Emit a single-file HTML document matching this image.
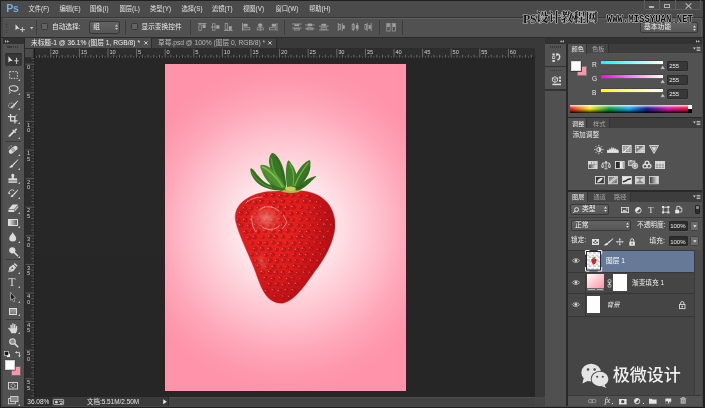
<!DOCTYPE html>
<html lang="zh"><head><meta charset="utf-8"><title>Photoshop</title><style>
html,body{margin:0;padding:0;background:#2a2a2a}
body{width:705px;height:408px;overflow:hidden;position:relative;font-family:"Liberation Sans","Noto Sans CJK SC",sans-serif}
#app{position:absolute;left:0;top:0;width:705px;height:408px;overflow:hidden;will-change:transform;opacity:0.999}
.a{position:absolute;box-sizing:border-box}
.t{position:absolute;white-space:nowrap;line-height:1;letter-spacing:0}
svg{overflow:visible}
</style></head><body>
<div id="app">
<div class="a" style="left:0px;top:0px;width:705px;height:408px;background:#202020;"></div>
<div class="a" style="left:1.2px;top:1.2px;width:702.2px;height:405.6px;background:#484848;"></div>
<div class="a" style="left:2.5px;top:37px;width:699.1px;height:368.5px;background:#2a2a2a;"></div>
<div class="a" style="left:1.2px;top:1.2px;width:702.2px;height:15.6px;background:#4c4c4c;"></div>
<span class="t" aria-label="Ps" style="left:6.2px;top:2.6px;font-size:10.5px;color:#78aee0;font-weight:bold;letter-spacing:-0.2px">Ps</span>
<span class="t" style="left:28.5px;top:6px;font-size:6.3px;color:#e2e2e2;">文件(F)</span>
<span class="t" style="left:59.5px;top:6px;font-size:6.3px;color:#e2e2e2;">编辑(E)</span>
<span class="t" style="left:90px;top:6px;font-size:6.3px;color:#e2e2e2;">图像(I)</span>
<span class="t" style="left:119.5px;top:6px;font-size:6.3px;color:#e2e2e2;">图层(L)</span>
<span class="t" style="left:150px;top:6px;font-size:6.3px;color:#e2e2e2;">类型(Y)</span>
<span class="t" style="left:181.5px;top:6px;font-size:6.3px;color:#e2e2e2;">选择(S)</span>
<span class="t" style="left:212px;top:6px;font-size:6.3px;color:#e2e2e2;">滤镜(T)</span>
<span class="t" style="left:243px;top:6px;font-size:6.3px;color:#e2e2e2;">视图(V)</span>
<span class="t" style="left:275.5px;top:6px;font-size:6.3px;color:#e2e2e2;">窗口(W)</span>
<span class="t" style="left:309px;top:6px;font-size:6.3px;color:#e2e2e2;">帮助(H)</span>
<div class="a" style="left:643.5px;top:0px;width:57px;height:10px;background:transparent;border:0.8px solid #5e5e5e;border-top:none;border-radius:0 0 2px 2px"></div>
<div class="a" style="left:658.5px;top:0px;width:0.8px;height:9.5px;background:#5e5e5e;"></div>
<div class="a" style="left:674.5px;top:0px;width:0.8px;height:9.5px;background:#5e5e5e;"></div>
<div class="a" style="left:648.5px;top:6.2px;width:5px;height:1.6px;background:#b4b4b4;"></div>
<div class="a" style="left:663.8px;top:3.6px;width:6.4px;height:4.6px;background:transparent;border:1px solid #b4b4b4;border-top-width:1.4px"></div>
<svg class="a" style="left:684.5px;top:2.6px;" width="7" height="6" viewBox="0 0 7 6"><path d="M0.6 0.4L6.4 5.6M6.4 0.4L0.6 5.6" stroke="#b4b4b4" stroke-width="1.2" fill="none"/></svg>
<div class="a" style="left:2.5px;top:17.5px;width:699.6px;height:19.5px;background:#525252;border-top:0.8px solid #606060;border-right:0.8px solid #606060;border-radius:0 2.5px 0 0"></div>
<div class="a" style="left:1.2px;top:16.6px;width:702.2px;height:1px;background:#383838;"></div>
<div class="a" style="left:5.5px;top:21.8px;width:1.2px;height:1.3px;background:#3a3a3a;"></div>
<div class="a" style="left:5.5px;top:24.400000000000002px;width:1.2px;height:1.3px;background:#3a3a3a;"></div>
<div class="a" style="left:5.5px;top:27.0px;width:1.2px;height:1.3px;background:#3a3a3a;"></div>
<div class="a" style="left:5.5px;top:29.6px;width:1.2px;height:1.3px;background:#3a3a3a;"></div>
<div class="a" style="left:5.5px;top:32.2px;width:1.2px;height:1.3px;background:#3a3a3a;"></div>
<svg class="a" style="left:15px;top:23.5px;" width="12" height="9" viewBox="0 0 12 9"><path d="M0.5 0.3L0.5 6.3L2.1 4.8L4.6 4.8Z" fill="#dcdcdc"/><path d="M7.4 3.2V8.2M4.9 5.7H9.9" stroke="#dcdcdc" stroke-width="0.9"/></svg>
<svg class="a" style="left:29.8px;top:26.6px;" width="4" height="3" viewBox="0 0 4 3"><path d="M0 0H3.4L1.7 2.2Z" fill="#d0d0d0"/></svg>
<div class="a" style="left:36.3px;top:20px;width:1px;height:14.5px;background:#3e3e3e;"></div>
<div class="a" style="left:41px;top:22.8px;width:7.4px;height:7.6px;background:#646464;border:1px solid #383838;border-radius:1.5px"></div>
<span class="t" style="left:52px;top:23.6px;font-size:6.7px;color:#ececec;">自动选择:</span>
<div class="a" style="left:89px;top:21px;width:30.5px;height:12.6px;background:#5c5c5c;border:0.8px solid #363636;border-radius:2.5px;background:linear-gradient(#646464,#565656)"></div>
<span class="t" style="left:93.2px;top:23.8px;font-size:6.7px;color:#ececec;">组</span>
<svg class="a" style="left:114.8px;top:24.3px;" width="3" height="6.4" viewBox="0 0 3 6.4"><path d="M0 2.4L1.5 0.5L3 2.4ZM0 3.9L1.5 5.8L3 3.9Z" fill="#d0d0d0"/></svg>
<div class="a" style="left:125.3px;top:20px;width:1px;height:14.5px;background:#3e3e3e;"></div>
<div class="a" style="left:131px;top:22.8px;width:7.4px;height:7.6px;background:#646464;border:1px solid #383838;border-radius:1.5px"></div>
<span class="t" style="left:141.5px;top:23.6px;font-size:6.7px;color:#ececec;">显示变换控件</span>
<div class="a" style="left:189.8px;top:20px;width:1px;height:14.5px;background:#3e3e3e;"></div>
<div class="a" style="left:283.8px;top:20px;width:1px;height:14.5px;background:#3e3e3e;"></div>
<div class="a" style="left:379px;top:20px;width:1px;height:14.5px;background:#3e3e3e;"></div>
<div class="a" style="left:402px;top:20px;width:1px;height:14.5px;background:#3e3e3e;"></div>
<div class="a" style="left:640px;top:22.3px;width:58.4px;height:11px;background:#606060;border:1px solid #3a3a3a;border-radius:2px;background:linear-gradient(#666,#585858)"></div>
<span class="t" style="left:644px;top:24.2px;font-size:6.8px;color:#f0f0f0;">基本功能</span>
<svg class="a" style="left:692.8px;top:24.6px;" width="3" height="6.4" viewBox="0 0 3 6.4"><path d="M0 2.4L1.5 0.5L3 2.4ZM0 3.9L1.5 5.8L3 3.9Z" fill="#e0e0e0"/></svg>
<div class="a" style="left:1.2px;top:37px;width:702.2px;height:1px;background:#2c2c2c;"></div>
<div class="a" style="left:25px;top:38px;width:520px;height:10.3px;background:#3a3a3a;"></div>
<div class="a" style="left:25px;top:38.2px;width:126.5px;height:10px;background:#505050;border-right:1px solid #2e2e2e"></div>
<span class="t" style="left:31px;top:39.9px;font-size:6.7px;color:#f0f0f0;">未标题-1 @ 36.1% (图层 1, RGB/8) *</span>
<svg class="a" style="left:143.5px;top:41.2px;" width="4" height="4" viewBox="0 0 4 4"><path d="M0.3 0.3L3.5 3.5M3.5 0.3L0.3 3.5" stroke="#e0e0e0" stroke-width="0.9"/></svg>
<div class="a" style="left:152px;top:38.6px;width:124.5px;height:9.6px;background:#434343;border-right:1px solid #2e2e2e"></div>
<span class="t" style="left:158px;top:39.9px;font-size:6.7px;color:#b8b8b8;">草莓.psd @ 100% (图层 0, RGB/8) *</span>
<svg class="a" style="left:268px;top:41.2px;" width="4" height="4" viewBox="0 0 4 4"><path d="M0.3 0.3L3.5 3.5M3.5 0.3L0.3 3.5" stroke="#d8d8d8" stroke-width="0.9"/></svg>
<div class="a" style="left:25px;top:48.3px;width:510px;height:349px;background:#272727;"></div>
<div class="a" style="left:25px;top:48.3px;width:510px;height:10px;background:#2e2e2e;border-bottom:0.8px solid #1c1c1c"></div>
<div class="a" style="left:25px;top:48.3px;width:10px;height:349px;background:#2e2e2e;border-right:0.8px solid #1c1c1c"></div>
<div class="a" style="left:25.3px;top:48.6px;width:9.2px;height:9.2px;background:#4c4c4c;border-right:0.8px solid #333;border-bottom:0.8px solid #333"></div>
<svg class="a" style="left:0px;top:0px;" width="705" height="408" viewBox="0 0 705 408"><g stroke="#949494" stroke-width="0.6" fill="none"><path d="M36.50 56.4V58"/><path d="M39.36 54.8V58"/><path d="M42.22 56.4V58"/><path d="M45.08 54.8V58"/><path d="M47.94 56.4V58"/><path d="M50.80 48.8V58"/><path d="M53.66 56.4V58"/><path d="M56.52 54.8V58"/><path d="M59.38 56.4V58"/><path d="M62.24 54.8V58"/><path d="M65.10 56.4V58"/><path d="M67.96 54.8V58"/><path d="M70.82 56.4V58"/><path d="M73.68 54.8V58"/><path d="M76.54 56.4V58"/><path d="M79.40 48.8V58"/><path d="M82.26 56.4V58"/><path d="M85.12 54.8V58"/><path d="M87.98 56.4V58"/><path d="M90.84 54.8V58"/><path d="M93.70 56.4V58"/><path d="M96.56 54.8V58"/><path d="M99.42 56.4V58"/><path d="M102.28 54.8V58"/><path d="M105.14 56.4V58"/><path d="M108.00 48.8V58"/><path d="M110.86 56.4V58"/><path d="M113.72 54.8V58"/><path d="M116.58 56.4V58"/><path d="M119.44 54.8V58"/><path d="M122.30 56.4V58"/><path d="M125.16 54.8V58"/><path d="M128.02 56.4V58"/><path d="M130.88 54.8V58"/><path d="M133.74 56.4V58"/><path d="M136.60 48.8V58"/><path d="M139.46 56.4V58"/><path d="M142.32 54.8V58"/><path d="M145.18 56.4V58"/><path d="M148.04 54.8V58"/><path d="M150.90 56.4V58"/><path d="M153.76 54.8V58"/><path d="M156.62 56.4V58"/><path d="M159.48 54.8V58"/><path d="M162.34 56.4V58"/><path d="M165.20 48.8V58"/><path d="M168.06 56.4V58"/><path d="M170.92 54.8V58"/><path d="M173.78 56.4V58"/><path d="M176.64 54.8V58"/><path d="M179.50 56.4V58"/><path d="M182.36 54.8V58"/><path d="M185.22 56.4V58"/><path d="M188.08 54.8V58"/><path d="M190.94 56.4V58"/><path d="M193.80 48.8V58"/><path d="M196.66 56.4V58"/><path d="M199.52 54.8V58"/><path d="M202.38 56.4V58"/><path d="M205.24 54.8V58"/><path d="M208.10 56.4V58"/><path d="M210.96 54.8V58"/><path d="M213.82 56.4V58"/><path d="M216.68 54.8V58"/><path d="M219.54 56.4V58"/><path d="M222.40 48.8V58"/><path d="M225.26 56.4V58"/><path d="M228.12 54.8V58"/><path d="M230.98 56.4V58"/><path d="M233.84 54.8V58"/><path d="M236.70 56.4V58"/><path d="M239.56 54.8V58"/><path d="M242.42 56.4V58"/><path d="M245.28 54.8V58"/><path d="M248.14 56.4V58"/><path d="M251.00 48.8V58"/><path d="M253.86 56.4V58"/><path d="M256.72 54.8V58"/><path d="M259.58 56.4V58"/><path d="M262.44 54.8V58"/><path d="M265.30 56.4V58"/><path d="M268.16 54.8V58"/><path d="M271.02 56.4V58"/><path d="M273.88 54.8V58"/><path d="M276.74 56.4V58"/><path d="M279.60 48.8V58"/><path d="M282.46 56.4V58"/><path d="M285.32 54.8V58"/><path d="M288.18 56.4V58"/><path d="M291.04 54.8V58"/><path d="M293.90 56.4V58"/><path d="M296.76 54.8V58"/><path d="M299.62 56.4V58"/><path d="M302.48 54.8V58"/><path d="M305.34 56.4V58"/><path d="M308.20 48.8V58"/><path d="M311.06 56.4V58"/><path d="M313.92 54.8V58"/><path d="M316.78 56.4V58"/><path d="M319.64 54.8V58"/><path d="M322.50 56.4V58"/><path d="M325.36 54.8V58"/><path d="M328.22 56.4V58"/><path d="M331.08 54.8V58"/><path d="M333.94 56.4V58"/><path d="M336.80 48.8V58"/><path d="M339.66 56.4V58"/><path d="M342.52 54.8V58"/><path d="M345.38 56.4V58"/><path d="M348.24 54.8V58"/><path d="M351.10 56.4V58"/><path d="M353.96 54.8V58"/><path d="M356.82 56.4V58"/><path d="M359.68 54.8V58"/><path d="M362.54 56.4V58"/><path d="M365.40 48.8V58"/><path d="M368.26 56.4V58"/><path d="M371.12 54.8V58"/><path d="M373.98 56.4V58"/><path d="M376.84 54.8V58"/><path d="M379.70 56.4V58"/><path d="M382.56 54.8V58"/><path d="M385.42 56.4V58"/><path d="M388.28 54.8V58"/><path d="M391.14 56.4V58"/><path d="M394.00 48.8V58"/><path d="M396.86 56.4V58"/><path d="M399.72 54.8V58"/><path d="M402.58 56.4V58"/><path d="M405.44 54.8V58"/><path d="M408.30 56.4V58"/><path d="M411.16 54.8V58"/><path d="M414.02 56.4V58"/><path d="M416.88 54.8V58"/><path d="M419.74 56.4V58"/><path d="M422.60 48.8V58"/><path d="M425.46 56.4V58"/><path d="M428.32 54.8V58"/><path d="M431.18 56.4V58"/><path d="M434.04 54.8V58"/><path d="M436.90 56.4V58"/><path d="M439.76 54.8V58"/><path d="M442.62 56.4V58"/><path d="M445.48 54.8V58"/><path d="M448.34 56.4V58"/><path d="M451.20 48.8V58"/><path d="M454.06 56.4V58"/><path d="M456.92 54.8V58"/><path d="M459.78 56.4V58"/><path d="M462.64 54.8V58"/><path d="M465.50 56.4V58"/><path d="M468.36 54.8V58"/><path d="M471.22 56.4V58"/><path d="M474.08 54.8V58"/><path d="M476.94 56.4V58"/><path d="M479.80 48.8V58"/><path d="M482.66 56.4V58"/><path d="M485.52 54.8V58"/><path d="M488.38 56.4V58"/><path d="M491.24 54.8V58"/><path d="M494.10 56.4V58"/><path d="M496.96 54.8V58"/><path d="M499.82 56.4V58"/><path d="M502.68 54.8V58"/><path d="M505.54 56.4V58"/><path d="M508.40 48.8V58"/><path d="M511.26 56.4V58"/><path d="M514.12 54.8V58"/><path d="M516.98 56.4V58"/><path d="M519.84 54.8V58"/><path d="M522.70 56.4V58"/><path d="M525.56 54.8V58"/><path d="M528.42 56.4V58"/><path d="M531.28 54.8V58"/></g><g stroke="#7e7e7e" stroke-width="0.55" fill="none"><path d="M25.5 64.20H34.7"/><path d="M32.6 67.06H34.3"/><path d="M31.2 69.92H34.3"/><path d="M32.6 72.78H34.3"/><path d="M31.2 75.64H34.3"/><path d="M32.6 78.50H34.3"/><path d="M31.2 81.36H34.3"/><path d="M32.6 84.22H34.3"/><path d="M31.2 87.08H34.3"/><path d="M32.6 89.94H34.3"/><path d="M25.5 92.80H34.7"/><path d="M32.6 95.66H34.3"/><path d="M31.2 98.52H34.3"/><path d="M32.6 101.38H34.3"/><path d="M31.2 104.24H34.3"/><path d="M32.6 107.10H34.3"/><path d="M31.2 109.96H34.3"/><path d="M32.6 112.82H34.3"/><path d="M31.2 115.68H34.3"/><path d="M32.6 118.54H34.3"/><path d="M25.5 121.40H34.7"/><path d="M32.6 124.26H34.3"/><path d="M31.2 127.12H34.3"/><path d="M32.6 129.98H34.3"/><path d="M31.2 132.84H34.3"/><path d="M32.6 135.70H34.3"/><path d="M31.2 138.56H34.3"/><path d="M32.6 141.42H34.3"/><path d="M31.2 144.28H34.3"/><path d="M32.6 147.14H34.3"/><path d="M25.5 150.00H34.7"/><path d="M32.6 152.86H34.3"/><path d="M31.2 155.72H34.3"/><path d="M32.6 158.58H34.3"/><path d="M31.2 161.44H34.3"/><path d="M32.6 164.30H34.3"/><path d="M31.2 167.16H34.3"/><path d="M32.6 170.02H34.3"/><path d="M31.2 172.88H34.3"/><path d="M32.6 175.74H34.3"/><path d="M25.5 178.60H34.7"/><path d="M32.6 181.46H34.3"/><path d="M31.2 184.32H34.3"/><path d="M32.6 187.18H34.3"/><path d="M31.2 190.04H34.3"/><path d="M32.6 192.90H34.3"/><path d="M31.2 195.76H34.3"/><path d="M32.6 198.62H34.3"/><path d="M31.2 201.48H34.3"/><path d="M32.6 204.34H34.3"/><path d="M25.5 207.20H34.7"/><path d="M32.6 210.06H34.3"/><path d="M31.2 212.92H34.3"/><path d="M32.6 215.78H34.3"/><path d="M31.2 218.64H34.3"/><path d="M32.6 221.50H34.3"/><path d="M31.2 224.36H34.3"/><path d="M32.6 227.22H34.3"/><path d="M31.2 230.08H34.3"/><path d="M32.6 232.94H34.3"/><path d="M25.5 235.80H34.7"/><path d="M32.6 238.66H34.3"/><path d="M31.2 241.52H34.3"/><path d="M32.6 244.38H34.3"/><path d="M31.2 247.24H34.3"/><path d="M32.6 250.10H34.3"/><path d="M31.2 252.96H34.3"/><path d="M32.6 255.82H34.3"/><path d="M31.2 258.68H34.3"/><path d="M32.6 261.54H34.3"/><path d="M25.5 264.40H34.7"/><path d="M32.6 267.26H34.3"/><path d="M31.2 270.12H34.3"/><path d="M32.6 272.98H34.3"/><path d="M31.2 275.84H34.3"/><path d="M32.6 278.70H34.3"/><path d="M31.2 281.56H34.3"/><path d="M32.6 284.42H34.3"/><path d="M31.2 287.28H34.3"/><path d="M32.6 290.14H34.3"/><path d="M25.5 293.00H34.7"/><path d="M32.6 295.86H34.3"/><path d="M31.2 298.72H34.3"/><path d="M32.6 301.58H34.3"/><path d="M31.2 304.44H34.3"/><path d="M32.6 307.30H34.3"/><path d="M31.2 310.16H34.3"/><path d="M32.6 313.02H34.3"/><path d="M31.2 315.88H34.3"/><path d="M32.6 318.74H34.3"/><path d="M25.5 321.60H34.7"/><path d="M32.6 324.46H34.3"/><path d="M31.2 327.32H34.3"/><path d="M32.6 330.18H34.3"/><path d="M31.2 333.04H34.3"/><path d="M32.6 335.90H34.3"/><path d="M31.2 338.76H34.3"/><path d="M32.6 341.62H34.3"/><path d="M31.2 344.48H34.3"/><path d="M32.6 347.34H34.3"/><path d="M25.5 350.20H34.7"/><path d="M32.6 353.06H34.3"/><path d="M31.2 355.92H34.3"/><path d="M32.6 358.78H34.3"/><path d="M31.2 361.64H34.3"/><path d="M32.6 364.50H34.3"/><path d="M31.2 367.36H34.3"/><path d="M32.6 370.22H34.3"/><path d="M31.2 373.08H34.3"/><path d="M32.6 375.94H34.3"/><path d="M25.5 378.80H34.7"/><path d="M32.6 381.66H34.3"/><path d="M31.2 384.52H34.3"/><path d="M32.6 387.38H34.3"/><path d="M31.2 390.24H34.3"/><path d="M32.6 393.10H34.3"/><path d="M31.2 395.96H34.3"/><path d="M32.6 61.34H34.3"/><path d="M31.2 58.48H34.3"/></g></svg>
<span class="t" aria-label="20" style="left:52.2px;top:49.9px;font-size:5.7px;color:#cfcfcf;">20</span>
<span class="t" aria-label="15" style="left:80.8px;top:49.9px;font-size:5.7px;color:#cfcfcf;">15</span>
<span class="t" aria-label="10" style="left:109.4px;top:49.9px;font-size:5.7px;color:#cfcfcf;">10</span>
<span class="t" aria-label="5" style="left:138.0px;top:49.9px;font-size:5.7px;color:#cfcfcf;">5</span>
<span class="t" aria-label="0" style="left:166.6px;top:49.9px;font-size:5.7px;color:#cfcfcf;">0</span>
<span class="t" aria-label="5" style="left:195.2px;top:49.9px;font-size:5.7px;color:#cfcfcf;">5</span>
<span class="t" aria-label="10" style="left:223.8px;top:49.9px;font-size:5.7px;color:#cfcfcf;">10</span>
<span class="t" aria-label="15" style="left:252.4px;top:49.9px;font-size:5.7px;color:#cfcfcf;">15</span>
<span class="t" aria-label="20" style="left:281.0px;top:49.9px;font-size:5.7px;color:#cfcfcf;">20</span>
<span class="t" aria-label="25" style="left:309.6px;top:49.9px;font-size:5.7px;color:#cfcfcf;">25</span>
<span class="t" aria-label="30" style="left:338.2px;top:49.9px;font-size:5.7px;color:#cfcfcf;">30</span>
<span class="t" aria-label="35" style="left:366.8px;top:49.9px;font-size:5.7px;color:#cfcfcf;">35</span>
<span class="t" aria-label="40" style="left:395.4px;top:49.9px;font-size:5.7px;color:#cfcfcf;">40</span>
<span class="t" aria-label="45" style="left:424.0px;top:49.9px;font-size:5.7px;color:#cfcfcf;">45</span>
<span class="t" aria-label="50" style="left:452.6px;top:49.9px;font-size:5.7px;color:#cfcfcf;">50</span>
<span class="t" aria-label="55" style="left:481.2px;top:49.9px;font-size:5.7px;color:#cfcfcf;">55</span>
<span class="t" aria-label="60" style="left:509.8px;top:49.9px;font-size:5.7px;color:#cfcfcf;">60</span>
<span class="t" aria-label="0" style="left:27.0px;top:65.4px;font-size:5.7px;color:#cfcfcf;">0</span>
<span class="t" aria-label="5" style="left:27.0px;top:94.0px;font-size:5.7px;color:#cfcfcf;">5</span>
<span class="t" aria-label="1" style="left:27.0px;top:122.6px;font-size:5.7px;color:#cfcfcf;">1</span>
<span class="t" aria-label="0" style="left:27.0px;top:128.2px;font-size:5.7px;color:#cfcfcf;">0</span>
<span class="t" aria-label="1" style="left:27.0px;top:151.2px;font-size:5.7px;color:#cfcfcf;">1</span>
<span class="t" aria-label="5" style="left:27.0px;top:156.8px;font-size:5.7px;color:#cfcfcf;">5</span>
<span class="t" aria-label="2" style="left:27.0px;top:179.8px;font-size:5.7px;color:#cfcfcf;">2</span>
<span class="t" aria-label="0" style="left:27.0px;top:185.4px;font-size:5.7px;color:#cfcfcf;">0</span>
<span class="t" aria-label="2" style="left:27.0px;top:208.4px;font-size:5.7px;color:#cfcfcf;">2</span>
<span class="t" aria-label="5" style="left:27.0px;top:214.0px;font-size:5.7px;color:#cfcfcf;">5</span>
<span class="t" aria-label="3" style="left:27.0px;top:237.0px;font-size:5.7px;color:#cfcfcf;">3</span>
<span class="t" aria-label="0" style="left:27.0px;top:242.6px;font-size:5.7px;color:#cfcfcf;">0</span>
<span class="t" aria-label="3" style="left:27.0px;top:265.6px;font-size:5.7px;color:#cfcfcf;">3</span>
<span class="t" aria-label="5" style="left:27.0px;top:271.2px;font-size:5.7px;color:#cfcfcf;">5</span>
<span class="t" aria-label="4" style="left:27.0px;top:294.2px;font-size:5.7px;color:#cfcfcf;">4</span>
<span class="t" aria-label="0" style="left:27.0px;top:299.8px;font-size:5.7px;color:#cfcfcf;">0</span>
<span class="t" aria-label="4" style="left:27.0px;top:322.8px;font-size:5.7px;color:#cfcfcf;">4</span>
<span class="t" aria-label="5" style="left:27.0px;top:328.4px;font-size:5.7px;color:#cfcfcf;">5</span>
<span class="t" aria-label="5" style="left:27.0px;top:351.4px;font-size:5.7px;color:#cfcfcf;">5</span>
<span class="t" aria-label="0" style="left:27.0px;top:357.0px;font-size:5.7px;color:#cfcfcf;">0</span>
<span class="t" aria-label="5" style="left:27.0px;top:380.0px;font-size:5.7px;color:#cfcfcf;">5</span>
<span class="t" aria-label="5" style="left:27.0px;top:385.6px;font-size:5.7px;color:#cfcfcf;">5</span>
<div class="a" style="left:534.6px;top:48.3px;width:10px;height:349px;background:#3a3a3a;"></div>
<div class="a" style="left:25px;top:397px;width:519.6px;height:8.6px;background:#444444;border-top:0.6px solid #505050"></div>
<div class="a" style="left:25px;top:397px;width:143.5px;height:8.6px;background:#3b3b3b;border-right:0.8px solid #2c2c2c"></div>
<div class="a" style="left:25px;top:397px;width:26.5px;height:8.6px;background:#2f2f2f;"></div>
<div class="a" style="left:534.6px;top:397px;width:9.4px;height:8.6px;background:#484848;"></div>
<span class="t" aria-label="36.08%" style="left:27.3px;top:398.6px;font-size:6.5px;color:#e8e8e8;">36.08%</span>
<svg class="a" style="left:53px;top:399px;" width="11" height="6" viewBox="0 0 11 6"><rect x="0.4" y="0.4" width="10.2" height="5.2" rx="0.8" fill="none" stroke="#cfcfcf" stroke-width="0.8"/><circle cx="3.4" cy="3" r="1.5" fill="#cfcfcf"/><path d="M6 2.2H9.2V4.6H7" stroke="#cfcfcf" stroke-width="0.9" fill="none"/></svg>
<span class="t" style="left:87px;top:398.6px;font-size:6.45px;color:#e8e8e8;">文档:5.51M/2.50M</span>
<svg class="a" style="left:163px;top:398.8px;" width="4" height="5.4" viewBox="0 0 4 5.4"><path d="M0.2 0.2L3.8 2.7L0.2 5.2Z" fill="#e6e6e6"/></svg>
<div class="a" id="doc" style="left:165px;top:64.2px;width:240.5px;height:327.1px;background:radial-gradient(circle 165px at 50% 50%, #ffffff 0%, #fff9fa 12%, #ffebef 25%, #ffcad4 50%, #ffa8ba 75%, #ff99ae 90%, #ff94aa 100%)"></div>
<div class="a" style="left:2.5px;top:38px;width:21px;height:367.8px;background:#535353;"></div>
<div class="a" style="left:2.5px;top:38px;width:21px;height:5.6px;background:#333333;"></div>
<svg class="a" style="left:5.2px;top:39.6px;" width="4.4" height="2.8" viewBox="0 0 4.4 2.8"><path d="M0 0L1.7 1.4L0 2.8ZM2.2 0L3.9 1.4L2.2 2.8Z" fill="#c4c4c4"/></svg>
<div class="a" style="left:7.4px;top:46.4px;width:1.2px;height:1.3px;background:#3a3a3a;"></div>
<div class="a" style="left:9.35px;top:46.4px;width:1.2px;height:1.3px;background:#3a3a3a;"></div>
<div class="a" style="left:11.3px;top:46.4px;width:1.2px;height:1.3px;background:#3a3a3a;"></div>
<div class="a" style="left:13.25px;top:46.4px;width:1.2px;height:1.3px;background:#3a3a3a;"></div>
<div class="a" style="left:15.2px;top:46.4px;width:1.2px;height:1.3px;background:#3a3a3a;"></div>
<div class="a" style="left:17.15px;top:46.4px;width:1.2px;height:1.3px;background:#3a3a3a;"></div>
<div class="a" style="left:5px;top:53px;width:17px;height:13.4px;background:#383838;border-radius:2px;box-shadow:inset 0 0.6px 1px #222"></div>
<div class="a" style="left:5px;top:141px;width:16px;height:0.9px;background:#3d3d3d;"></div>
<div class="a" style="left:5px;top:259.4px;width:16px;height:0.9px;background:#3d3d3d;"></div>
<div class="a" style="left:5px;top:319.2px;width:16px;height:0.9px;background:#3d3d3d;"></div>
<svg class="a" style="left:7.8px;top:55.8px;" width="12" height="8" viewBox="0 0 12 8"><path d="M0.4 0.2V6.4L2.1 4.9L4.8 4.9Z" fill="#dcdcdc"/><path d="M8.5 2.4V7.2M6.9 4.8H10.1" stroke="#dcdcdc" stroke-width="0.8"/><path d="M8.5 1.6l-0.9 1.1h1.8zM8.5 8l-0.9-1.1h1.8zM6.2 4.8l1-0.9v1.8zM10.8 4.8l-1-0.9v1.8z" fill="#dcdcdc"/></svg>
<svg class="a" style="left:8.5px;top:70.5px;" width="9" height="8" viewBox="0 0 9 8"><rect x="0.6" y="0.6" width="7.8" height="6.8" fill="none" stroke="#dcdcdc" stroke-width="0.85" stroke-dasharray="1.6 1.2"/></svg>
<svg class="a" style="left:18.2px;top:78.6px;" width="2" height="2" viewBox="0 0 2 2"><path d="M2 0V2H0Z" fill="#c8c8c8"/></svg>
<svg class="a" style="left:8px;top:85px;" width="10.5" height="9" viewBox="0 0 10.5 9"><ellipse cx="5.6" cy="3.4" rx="4.4" ry="2.7" fill="none" stroke="#dcdcdc" stroke-width="1.05" transform="rotate(7 5.6 3.4)"/><path d="M2 5.2C1 6 1.4 7 2.4 7.2C1.6 7.8 1.4 8.4 1.2 8.8" fill="none" stroke="#dcdcdc" stroke-width="0.9"/></svg>
<svg class="a" style="left:18.2px;top:93.2px;" width="2" height="2" viewBox="0 0 2 2"><path d="M2 0V2H0Z" fill="#c8c8c8"/></svg>
<svg class="a" style="left:8px;top:99.5px;" width="10.5" height="9" viewBox="0 0 10.5 9"><ellipse cx="3.4" cy="5.6" rx="2.9" ry="2.5" fill="none" stroke="#dcdcdc" stroke-width="0.8" stroke-dasharray="1.2 0.8"/><path d="M9.8 0.4L4.6 5.2L5.8 6.4L10.2 1Z" fill="#dcdcdc"/><path d="M4.2 5.4C3.2 6 3 7.2 2.2 7.8C3.6 8.2 5.4 7.6 5.8 6.6Z" fill="#dcdcdc"/></svg>
<svg class="a" style="left:18.2px;top:107.8px;" width="2" height="2" viewBox="0 0 2 2"><path d="M2 0V2H0Z" fill="#c8c8c8"/></svg>
<svg class="a" style="left:8px;top:114px;" width="9.5" height="9.5" viewBox="0 0 9.5 9.5"><path d="M2.6 0V6.9H9.5M0 2.6H6.9V9.5" fill="none" stroke="#dcdcdc" stroke-width="1.3"/><path d="M9 0.5L6 3.5" stroke="#dcdcdc" stroke-width="0.7"/></svg>
<svg class="a" style="left:18.2px;top:122.4px;" width="2" height="2" viewBox="0 0 2 2"><path d="M2 0V2H0Z" fill="#c8c8c8"/></svg>
<svg class="a" style="left:8.3px;top:128px;" width="9.5" height="9.5" viewBox="0 0 9.5 9.5"><path d="M0.4 9.1L1 7.2L5.4 2.8L6.7 4.1L2.3 8.5Z" fill="#dcdcdc"/><path d="M4.8 1.9L7.6 4.7" stroke="#dcdcdc" stroke-width="1.3"/><path d="M6.2 2.2L7.8 0.6C8.4 0 9.6 1.1 8.9 1.8L7.3 3.4Z" fill="#dcdcdc"/></svg>
<svg class="a" style="left:18.2px;top:136.8px;" width="2" height="2" viewBox="0 0 2 2"><path d="M2 0V2H0Z" fill="#c8c8c8"/></svg>
<svg class="a" style="left:8px;top:145px;" width="10.5" height="9.5" viewBox="0 0 10.5 9.5"><g transform="rotate(-38 5.2 4.8)"><rect x="0.2" y="2.6" width="10" height="4.4" rx="2.2" fill="#dcdcdc"/><rect x="3.6" y="2.6" width="3.2" height="4.4" fill="#a8a8a8"/></g><path d="M0.8 3.4A2.6 2.6 0 0 1 4 1" fill="none" stroke="#dcdcdc" stroke-width="0.7" stroke-dasharray="1 0.7"/></svg>
<svg class="a" style="left:18.2px;top:153.6px;" width="2" height="2" viewBox="0 0 2 2"><path d="M2 0V2H0Z" fill="#c8c8c8"/></svg>
<svg class="a" style="left:8px;top:159px;" width="10.5" height="9.5" viewBox="0 0 10.5 9.5"><path d="M10 0.2L4.4 5.6L5.4 6.6L10.4 0.8Z" fill="#dcdcdc"/><path d="M4 5.8C2.6 6.2 2.6 7.6 1 8.2C2.6 9.2 5.2 8.6 5.4 6.8Z" fill="#dcdcdc"/></svg>
<svg class="a" style="left:18.2px;top:167.6px;" width="2" height="2" viewBox="0 0 2 2"><path d="M2 0V2H0Z" fill="#c8c8c8"/></svg>
<svg class="a" style="left:8px;top:174px;" width="9.5" height="9.5" viewBox="0 0 9.5 9.5"><path d="M3.3 0.9A1.6 1.6 0 0 1 6.3 0.9C6.6 2.2 5.7 2.8 5.7 4.2H8.4C9 4.2 9.2 4.6 9.2 5.2V6.4H0.4V5.2C0.4 4.6 0.6 4.2 1.2 4.2H3.9C3.9 2.8 3 2.2 3.3 0.9Z" fill="#dcdcdc"/><rect x="0.4" y="7.3" width="8.8" height="1.5" fill="#dcdcdc"/></svg>
<svg class="a" style="left:18.2px;top:182.2px;" width="2" height="2" viewBox="0 0 2 2"><path d="M2 0V2H0Z" fill="#c8c8c8"/></svg>
<svg class="a" style="left:8px;top:189px;" width="10.5" height="9.5" viewBox="0 0 10.5 9.5"><path d="M10 0.4L5 5.2L6 6.2L10.4 1Z" fill="#dcdcdc"/><path d="M4.6 5.4C3.4 5.8 3.4 7 2 7.6C3.4 8.4 5.6 8 5.8 6.4Z" fill="#dcdcdc"/><path d="M1 4.6A3.2 3.2 0 0 1 6.4 1.8" fill="none" stroke="#dcdcdc" stroke-width="0.9"/><path d="M0 3.4L1 5.6L2.6 4Z" fill="#dcdcdc"/></svg>
<svg class="a" style="left:18.2px;top:197.2px;" width="2" height="2" viewBox="0 0 2 2"><path d="M2 0V2H0Z" fill="#c8c8c8"/></svg>
<svg class="a" style="left:8px;top:204px;" width="10.5" height="8.5" viewBox="0 0 10.5 8.5"><path d="M0.4 5.2L4.6 0.6H10.2L6 5.2Z" fill="#dcdcdc"/><path d="M0.4 5.8H6V8H0.4Z" fill="#dcdcdc"/><path d="M6.5 5.6L10.2 1.4V3.6L6.5 8Z" fill="#bdbdbd"/></svg>
<svg class="a" style="left:18.2px;top:211.6px;" width="2" height="2" viewBox="0 0 2 2"><path d="M2 0V2H0Z" fill="#c8c8c8"/></svg>
<div class="a" style="left:8px;top:219px;width:9.6px;height:7.4px;border:0.9px solid #dcdcdc;background:linear-gradient(90deg,#e8e8e8,#5a5a5a)"></div>
<svg class="a" style="left:18.2px;top:225.6px;" width="2" height="2" viewBox="0 0 2 2"><path d="M2 0V2H0Z" fill="#c8c8c8"/></svg>
<svg class="a" style="left:9px;top:232px;" width="7.5" height="9.5" viewBox="0 0 7.5 9.5"><path d="M3.7 0.2C5 2.6 7.2 4.4 7.2 6.3A3.5 3.2 0 0 1 0.2 6.3C0.2 4.4 2.4 2.6 3.7 0.2Z" fill="#dcdcdc"/></svg>
<svg class="a" style="left:18.2px;top:240.6px;" width="2" height="2" viewBox="0 0 2 2"><path d="M2 0V2H0Z" fill="#c8c8c8"/></svg>
<svg class="a" style="left:8.5px;top:247px;" width="9.5" height="9.5" viewBox="0 0 9.5 9.5"><circle cx="3.3" cy="3.3" r="3.1" fill="#dcdcdc"/><path d="M5.2 5.4L8.6 8.8" stroke="#dcdcdc" stroke-width="1.5" stroke-linecap="round"/></svg>
<svg class="a" style="left:18.2px;top:255.6px;" width="2" height="2" viewBox="0 0 2 2"><path d="M2 0V2H0Z" fill="#c8c8c8"/></svg>
<svg class="a" style="left:8px;top:263px;" width="10" height="9.5" viewBox="0 0 10 9.5"><path d="M0.3 9.2L1.4 4.4L5.2 1.6L8 4.4L5.2 8.2Z" fill="#dcdcdc"/><path d="M5.8 1L8.6 3.8L9.6 2.8L6.8 0Z" fill="#dcdcdc"/><circle cx="4.4" cy="5.2" r="0.9" fill="#535353"/><path d="M0.5 9L3.8 5.8" stroke="#535353" stroke-width="0.6"/></svg>
<svg class="a" style="left:18.2px;top:271.6px;" width="2" height="2" viewBox="0 0 2 2"><path d="M2 0V2H0Z" fill="#c8c8c8"/></svg>
<span class="t" style="left:8.6px;top:276.6px;font-size:11.5px;color:#dcdcdc;font-family:'Liberation Serif',serif;">T</span>
<svg class="a" style="left:18.2px;top:285.6px;" width="2" height="2" viewBox="0 0 2 2"><path d="M2 0V2H0Z" fill="#c8c8c8"/></svg>
<svg class="a" style="left:10px;top:292px;" width="6" height="10.5" viewBox="0 0 6 10.5"><path d="M0.5 0.5V8.3L2.2 6.7L3.5 9.8L4.8 9.2L3.5 6.2H5.7Z" fill="#1c1c1c" stroke="#d0d0d0" stroke-width="0.6"/></svg>
<svg class="a" style="left:18.2px;top:300.6px;" width="2" height="2" viewBox="0 0 2 2"><path d="M2 0V2H0Z" fill="#c8c8c8"/></svg>
<div class="a" style="left:8.8px;top:308px;width:8px;height:7px;border:0.9px solid #dcdcdc;background:linear-gradient(#a0a0a0,#7c7c7c)"></div>
<svg class="a" style="left:18.2px;top:314.4px;" width="2" height="2" viewBox="0 0 2 2"><path d="M2 0V2H0Z" fill="#c8c8c8"/></svg>
<svg class="a" style="left:8px;top:323px;" width="10.5" height="10.5" viewBox="0 0 10.5 10.5"><g stroke="#dcdcdc" stroke-width="1.35" stroke-linecap="round" fill="none"><path d="M3.1 6V2.4"/><path d="M4.9 5.6V1"/><path d="M6.7 5.8V1.6"/><path d="M8.5 6.4V3.4"/><path d="M2.6 7.4L0.9 5.4"/></g><path d="M2.4 5.2H9.2C9.2 7.4 8.8 8.8 7.8 10.2H3.4C2.6 9 2.2 8 2 6.6Z" fill="#dcdcdc"/></svg>
<svg class="a" style="left:18.2px;top:332px;" width="2" height="2" viewBox="0 0 2 2"><path d="M2 0V2H0Z" fill="#c8c8c8"/></svg>
<svg class="a" style="left:9px;top:338px;" width="9.5" height="9.5" viewBox="0 0 9.5 9.5"><circle cx="3.5" cy="3.5" r="2.8" fill="#8e8e8e" stroke="#dcdcdc" stroke-width="1.1"/><path d="M5.8 5.8L8.8 8.8" stroke="#dcdcdc" stroke-width="1.6" stroke-linecap="round"/></svg>
<svg class="a" style="left:4px;top:351px;" width="7" height="7" viewBox="0 0 7 7"><rect x="2.4" y="2.4" width="4" height="4" fill="#f0f0f0" stroke="#222" stroke-width="0.5"/><rect x="0.4" y="0.4" width="4" height="4" fill="#1a1a1a" stroke="#e0e0e0" stroke-width="0.6"/></svg>
<svg class="a" style="left:14.5px;top:351px;" width="6" height="6.5" viewBox="0 0 6 6.5"><path d="M1.4 1.4H4.4V4.8" fill="none" stroke="#dcdcdc" stroke-width="0.9"/><path d="M0 1.4L1.8 0V2.8ZM4.4 6.2L3 4.4H5.8Z" fill="#dcdcdc"/></svg>
<div class="a" style="left:10.8px;top:365.8px;width:10.6px;height:10.6px;background:#fe97ab;border:0.6px solid #6a6a6a"></div>
<div class="a" style="left:4.9px;top:359.9px;width:10.4px;height:10.6px;background:#ffffff;border:0.5px solid #cfcfcf;box-shadow:0 0 0 0.6px #444"></div>
<svg class="a" style="left:8px;top:382px;" width="10" height="7.5" viewBox="0 0 10 7.5"><rect x="0.5" y="0.5" width="9" height="6.5" fill="none" stroke="#dcdcdc" stroke-width="0.9"/><circle cx="5" cy="3.75" r="2" fill="none" stroke="#dcdcdc" stroke-width="1" stroke-dasharray="0.9 0.6"/></svg>
<svg class="a" style="left:8px;top:395.6px;" width="10.5" height="8.5" viewBox="0 0 10.5 8.5"><rect x="0.5" y="2.6" width="7" height="5.2" fill="#535353" stroke="#dcdcdc" stroke-width="0.8"/><rect x="2.6" y="0.5" width="7.4" height="5.2" fill="#8a8a8a" stroke="#dcdcdc" stroke-width="0.8"/></svg>
<svg class="a" style="left:18.2px;top:403.6px;" width="2" height="2" viewBox="0 0 2 2"><path d="M2 0V2H0Z" fill="#c8c8c8"/></svg>
<div class="a" style="left:544.8px;top:38px;width:157px;height:5.6px;background:#333333;"></div>
<svg class="a" style="left:560px;top:39.6px;" width="4.4" height="2.8" viewBox="0 0 4.4 2.8"><path d="M1.7 0L0 1.4L1.7 2.8ZM3.9 0L2.2 1.4L3.9 2.8Z" fill="#c4c4c4"/></svg>
<svg class="a" style="left:696px;top:39.6px;" width="4.4" height="2.8" viewBox="0 0 4.4 2.8"><path d="M0 0L1.7 1.4L0 2.8ZM2.2 0L3.9 1.4L2.2 2.8Z" fill="#c4c4c4"/></svg>
<div class="a" style="left:545px;top:43.6px;width:20.9px;height:362px;background:#515151;"></div>
<div class="a" style="left:545px;top:43.6px;width:20.9px;height:22.2px;background:#535353;"></div>
<div class="a" style="left:545px;top:67px;width:20.9px;height:22.4px;background:#535353;"></div>
<div class="a" style="left:545px;top:65.8px;width:20.9px;height:1.2px;background:#333;"></div>
<div class="a" style="left:545px;top:89.4px;width:20.9px;height:1.2px;background:#333;"></div>
<div class="a" style="left:549.8px;top:46.4px;width:1.2px;height:1.3px;background:#3a3a3a;"></div>
<div class="a" style="left:551.75px;top:46.4px;width:1.2px;height:1.3px;background:#3a3a3a;"></div>
<div class="a" style="left:553.6999999999999px;top:46.4px;width:1.2px;height:1.3px;background:#3a3a3a;"></div>
<div class="a" style="left:555.65px;top:46.4px;width:1.2px;height:1.3px;background:#3a3a3a;"></div>
<div class="a" style="left:557.5999999999999px;top:46.4px;width:1.2px;height:1.3px;background:#3a3a3a;"></div>
<div class="a" style="left:559.55px;top:46.4px;width:1.2px;height:1.3px;background:#3a3a3a;"></div>
<div class="a" style="left:549.8px;top:69.6px;width:1.2px;height:1.3px;background:#3a3a3a;"></div>
<div class="a" style="left:551.75px;top:69.6px;width:1.2px;height:1.3px;background:#3a3a3a;"></div>
<div class="a" style="left:553.6999999999999px;top:69.6px;width:1.2px;height:1.3px;background:#3a3a3a;"></div>
<div class="a" style="left:555.65px;top:69.6px;width:1.2px;height:1.3px;background:#3a3a3a;"></div>
<div class="a" style="left:557.5999999999999px;top:69.6px;width:1.2px;height:1.3px;background:#3a3a3a;"></div>
<div class="a" style="left:559.55px;top:69.6px;width:1.2px;height:1.3px;background:#3a3a3a;"></div>
<svg class="a" style="left:551.5px;top:53px;" width="9.5" height="9.5" viewBox="0 0 9.5 9.5"><rect x="0.4" y="0.5" width="2.4" height="2" fill="#dcdcdc"/><rect x="0.4" y="3.7" width="2.4" height="2" fill="none" stroke="#dcdcdc" stroke-width="0.7"/><rect x="0.4" y="7" width="2.4" height="2" fill="#dcdcdc"/><path d="M4.6 0.8C8.4 0.8 8.8 5.6 5.4 7.2" fill="none" stroke="#dcdcdc" stroke-width="1.3"/><path d="M4.2 0.2V3.4L7 1.2Z" fill="#dcdcdc"/></svg>
<svg class="a" style="left:551.5px;top:76px;" width="9.5" height="9.5" viewBox="0 0 9.5 9.5"><path d="M0.4 2L3 0.6L5.6 2V5L3 6.4L0.4 5Z" fill="none" stroke="#dcdcdc" stroke-width="0.9"/><path d="M0.4 2L3 3.4L5.6 2M3 3.4V6.4" stroke="#dcdcdc" stroke-width="0.7" fill="none"/><rect x="7" y="0.6" width="2" height="2" fill="#dcdcdc"/><rect x="7" y="3.8" width="2" height="2" fill="#dcdcdc"/><rect x="0.4" y="7.6" width="8.6" height="1.6" fill="#dcdcdc"/></svg>
<div class="a" style="left:567.5px;top:43.6px;width:134.1px;height:73.4px;background:#535353;"></div>
<div class="a" style="left:567.5px;top:43.6px;width:134.1px;height:9.8px;background:#3e3e3e;"></div>
<div class="a" style="left:567.5px;top:43.6px;width:41px;height:9.8px;background:#464646;border-right:0.8px solid #343434"></div>
<div class="a" style="left:567.5px;top:43.6px;width:19.5px;height:10.3px;background:#535353;border-right:1px solid #363636"></div>
<span class="t" style="left:571.5px;top:45.800000000000004px;font-size:6.2px;color:#ececec;">颜色</span>
<span class="t" style="left:592px;top:45.800000000000004px;font-size:6.2px;color:#a8a8a8;">色板</span>
<svg class="a" style="left:693px;top:46.6px;" width="7.5" height="4.5" viewBox="0 0 7.5 4.5"><path d="M0 0.6H2.8L1.4 2.6Z" fill="#d6d6d6"/><path d="M3.6 0.4H7.4M3.6 2H7.4M3.6 3.6H7.4" stroke="#d6d6d6" stroke-width="0.8"/></svg>
<div class="a" style="left:576.5px;top:66.4px;width:10.2px;height:9.8px;background:#fe97ab;border:0.5px solid #777"></div>
<div class="a" style="left:570.6px;top:60.5px;width:10.7px;height:10.1px;background:#fff;border:0.5px solid #dcdcdc;box-shadow:0.3px 0.3px 0 0.6px #3a3a3a"></div>
<span class="t" aria-label="R" style="left:592px;top:61.900000000000006px;font-size:6.6px;color:#ececec;">R</span>
<div class="a" style="left:600.6px;top:61.2px;width:62.8px;height:3.1px;background:linear-gradient(90deg,#00ffff,#ffffff);box-shadow:0 -0.5px 0 #3a3a3a, 0 0.5px 0 #6a6a6a"></div>
<svg class="a" style="left:660.4px;top:64.8px;" width="5.4" height="4.4" viewBox="0 0 5.4 4.4"><path d="M2.7 0.2L5.2 4.2H0.2Z" fill="#c8c8c8" stroke="#3a3a3a" stroke-width="0.4"/></svg>
<div class="a" style="left:667px;top:60.6px;width:20.8px;height:10px;background:#393939;border:0.7px solid #2c2c2c;border-radius:1px;box-shadow:0 0.6px 0 #646464"></div>
<span class="t" aria-label="255" style="left:669.2px;top:62.800000000000004px;font-size:6px;color:#ececec;">255</span>
<span class="t" aria-label="G" style="left:592px;top:76.0px;font-size:6.6px;color:#ececec;">G</span>
<div class="a" style="left:600.6px;top:75.3px;width:62.8px;height:3.1px;background:linear-gradient(90deg,#ff00ff,#ffffff);box-shadow:0 -0.5px 0 #3a3a3a, 0 0.5px 0 #6a6a6a"></div>
<svg class="a" style="left:660.4px;top:78.89999999999999px;" width="5.4" height="4.4" viewBox="0 0 5.4 4.4"><path d="M2.7 0.2L5.2 4.2H0.2Z" fill="#c8c8c8" stroke="#3a3a3a" stroke-width="0.4"/></svg>
<div class="a" style="left:667px;top:74.7px;width:20.8px;height:10px;background:#393939;border:0.7px solid #2c2c2c;border-radius:1px;box-shadow:0 0.6px 0 #646464"></div>
<span class="t" aria-label="255" style="left:669.2px;top:76.89999999999999px;font-size:6px;color:#ececec;">255</span>
<span class="t" aria-label="B" style="left:592px;top:90.10000000000001px;font-size:6.6px;color:#ececec;">B</span>
<div class="a" style="left:600.6px;top:89.4px;width:62.8px;height:3.1px;background:linear-gradient(90deg,#ffff00,#ffffff);box-shadow:0 -0.5px 0 #3a3a3a, 0 0.5px 0 #6a6a6a"></div>
<svg class="a" style="left:660.4px;top:93.0px;" width="5.4" height="4.4" viewBox="0 0 5.4 4.4"><path d="M2.7 0.2L5.2 4.2H0.2Z" fill="#c8c8c8" stroke="#3a3a3a" stroke-width="0.4"/></svg>
<div class="a" style="left:667px;top:88.80000000000001px;width:20.8px;height:10px;background:#393939;border:0.7px solid #2c2c2c;border-radius:1px;box-shadow:0 0.6px 0 #646464"></div>
<span class="t" aria-label="255" style="left:669.2px;top:91.0px;font-size:6px;color:#ececec;">255</span>
<div class="a" style="left:569.8px;top:105px;width:118px;height:7.8px;background:linear-gradient(90deg,#ee1c24 0%,#f6ec1a 17%,#0ea03c 33%,#1cacf2 50%,#1a2494 65%,#d81ca4 83%,#ee1436 100%)"></div>
<div class="a" style="left:569.8px;top:105px;width:118px;height:7.8px;background:linear-gradient(180deg,rgba(255,255,255,0.85) 0%,rgba(255,255,255,0) 40%,rgba(0,0,0,0) 50%,rgba(0,0,0,0.9) 100%)"></div>
<div class="a" style="left:687.8px;top:105px;width:4.4px;height:3.9px;background:#fff;"></div>
<div class="a" style="left:687.8px;top:108.9px;width:4.4px;height:3.9px;background:#000;"></div>
<div class="a" style="left:567.5px;top:118.4px;width:134.1px;height:71.4px;background:#535353;"></div>
<div class="a" style="left:567.5px;top:118.4px;width:134.1px;height:9.2px;background:#3e3e3e;"></div>
<div class="a" style="left:567.5px;top:118.4px;width:42px;height:9.2px;background:#464646;border-right:0.8px solid #343434"></div>
<div class="a" style="left:567.5px;top:118.4px;width:19px;height:9.7px;background:#535353;border-right:1px solid #363636"></div>
<span class="t" style="left:572px;top:120.60000000000001px;font-size:6.2px;color:#ececec;">调整</span>
<span class="t" style="left:593px;top:120.60000000000001px;font-size:6.2px;color:#a8a8a8;">样式</span>
<svg class="a" style="left:693px;top:121.4px;" width="7.5" height="4.5" viewBox="0 0 7.5 4.5"><path d="M0 0.6H2.8L1.4 2.6Z" fill="#d6d6d6"/><path d="M3.6 0.4H7.4M3.6 2H7.4M3.6 3.6H7.4" stroke="#d6d6d6" stroke-width="0.8"/></svg>
<span class="t" style="left:572.4px;top:132px;font-size:6.7px;color:#ececec;">添加调整</span>
<div class="a" style="left:567.5px;top:192px;width:134.1px;height:213.6px;background:#535353;"></div>
<div class="a" style="left:567.5px;top:192px;width:134.1px;height:9.6px;background:#3e3e3e;"></div>
<div class="a" style="left:567.5px;top:192px;width:63px;height:9.6px;background:#464646;border-right:0.8px solid #343434"></div>
<div class="a" style="left:567.5px;top:192px;width:20px;height:10.1px;background:#535353;border-right:1px solid #363636"></div>
<span class="t" style="left:572px;top:194.2px;font-size:6.2px;color:#ececec;">图层</span>
<span class="t" style="left:593.4px;top:194.2px;font-size:6.2px;color:#a8a8a8;">通道</span>
<span class="t" style="left:614px;top:194.2px;font-size:6.2px;color:#a8a8a8;">路径</span>
<svg class="a" style="left:693px;top:195px;" width="7.5" height="4.5" viewBox="0 0 7.5 4.5"><path d="M0 0.6H2.8L1.4 2.6Z" fill="#d6d6d6"/><path d="M3.6 0.4H7.4M3.6 2H7.4M3.6 3.6H7.4" stroke="#d6d6d6" stroke-width="0.8"/></svg>
<div class="a" style="left:570.3px;top:204px;width:39px;height:11.2px;background:#5e5e5e;border:0.8px solid #3a3a3a;border-radius:2px;background:linear-gradient(#646464,#585858)"></div>
<svg class="a" style="left:573.4px;top:206.6px;" width="6.5" height="6.5" viewBox="0 0 6.5 6.5"><circle cx="3.6" cy="2.6" r="2" fill="none" stroke="#ececec" stroke-width="0.9"/><path d="M2.2 4L0.4 6" stroke="#ececec" stroke-width="1"/></svg>
<span class="t" style="left:582px;top:206.2px;font-size:6.8px;color:#f4f4f4;">类型</span>
<svg class="a" style="left:603.6px;top:206.4px;" width="3" height="6.4" viewBox="0 0 3 6.4"><path d="M0 2.4L1.5 0.5L3 2.4ZM0 3.9L1.5 5.8L3 3.9Z" fill="#e0e0e0"/></svg>
<div class="a" style="left:567.5px;top:217.2px;width:134.1px;height:0.8px;background:#3e3e3e;"></div>
<div class="a" style="left:570.5px;top:220px;width:60.6px;height:10.6px;background:#5e5e5e;border:0.8px solid #3a3a3a;border-radius:2px;background:linear-gradient(#646464,#585858)"></div>
<span class="t" style="left:575px;top:222px;font-size:6.8px;color:#f4f4f4;">正常</span>
<svg class="a" style="left:626px;top:222.2px;" width="3" height="6.4" viewBox="0 0 3 6.4"><path d="M0 2.4L1.5 0.5L3 2.4ZM0 3.9L1.5 5.8L3 3.9Z" fill="#e0e0e0"/></svg>
<span class="t" style="left:637px;top:222.2px;font-size:6.7px;color:#f0f0f0;">不透明度:</span>
<div class="a" style="left:668.5px;top:220.8px;width:19.8px;height:10px;background:#2e2e2e;border:0.6px solid #282828;border-radius:1px;box-shadow:0 0.6px 0 #666"></div>
<span class="t" aria-label="100%" style="left:670.2px;top:223px;font-size:6px;color:#ececec;">100%</span>
<div class="a" style="left:689.6px;top:220.8px;width:9.6px;height:10px;background:#6c6c6c;border:0.6px solid #444;border-radius:1.5px"></div>
<svg class="a" style="left:692.6px;top:224.6px;" width="4" height="3" viewBox="0 0 4 3"><path d="M0.2 0.2H3.6L1.9 2.4Z" fill="#e8e8e8"/></svg>
<span class="t" style="left:571px;top:237px;font-size:6.7px;color:#f0f0f0;">锁定:</span>
<span class="t" style="left:649.6px;top:237.6px;font-size:6.7px;color:#f0f0f0;">填充:</span>
<div class="a" style="left:668.5px;top:236.4px;width:19.8px;height:10px;background:#2e2e2e;border:0.6px solid #282828;border-radius:1px;box-shadow:0 0.6px 0 #666"></div>
<span class="t" aria-label="100%" style="left:670.2px;top:238.6px;font-size:6px;color:#ececec;">100%</span>
<div class="a" style="left:689.6px;top:236.4px;width:9.6px;height:10px;background:#6c6c6c;border:0.6px solid #444;border-radius:1.5px"></div>
<svg class="a" style="left:692.6px;top:240.2px;" width="4" height="3" viewBox="0 0 4 3"><path d="M0.2 0.2H3.6L1.9 2.4Z" fill="#e8e8e8"/></svg>
<div class="a" style="left:567.5px;top:249.6px;width:126.7px;height:145.4px;background:#464646;"></div>
<div class="a" style="left:567.5px;top:249.6px;width:17.5px;height:66px;background:#484848;"></div>
<div class="a" style="left:584.6px;top:250px;width:109.6px;height:21.6px;background:#677a99;"></div>
<div class="a" style="left:567.5px;top:249.6px;width:126.7px;height:0.8px;background:#383838;"></div>
<div class="a" style="left:567.5px;top:271.5px;width:126.7px;height:0.8px;background:#383838;"></div>
<div class="a" style="left:567.5px;top:293.2px;width:126.7px;height:0.8px;background:#383838;"></div>
<div class="a" style="left:567.5px;top:315.5px;width:126.7px;height:0.8px;background:#383838;"></div>
<div class="a" style="left:584.8px;top:249.6px;width:0.8px;height:66px;background:#383838;"></div>
<svg class="a" style="left:572px;top:258.4px;" width="7.8" height="5.2" viewBox="0 0 7.8 5.2"><path d="M0.3 2.6C1.9 0.1 5.9 0.1 7.5 2.6C5.9 5.1 1.9 5.1 0.3 2.6Z" fill="#4a4a4a" stroke="#dadada" stroke-width="0.7"/><circle cx="3.9" cy="2.5" r="1.3" fill="#e4e4e4"/></svg>
<svg class="a" style="left:572px;top:280.2px;" width="7.8" height="5.2" viewBox="0 0 7.8 5.2"><path d="M0.3 2.6C1.9 0.1 5.9 0.1 7.5 2.6C5.9 5.1 1.9 5.1 0.3 2.6Z" fill="#4a4a4a" stroke="#dadada" stroke-width="0.7"/><circle cx="3.9" cy="2.5" r="1.3" fill="#e4e4e4"/></svg>
<svg class="a" style="left:572px;top:302.2px;" width="7.8" height="5.2" viewBox="0 0 7.8 5.2"><path d="M0.3 2.6C1.9 0.1 5.9 0.1 7.5 2.6C5.9 5.1 1.9 5.1 0.3 2.6Z" fill="#4a4a4a" stroke="#dadada" stroke-width="0.7"/><circle cx="3.9" cy="2.5" r="1.3" fill="#e4e4e4"/></svg>
<div class="a" style="left:587.2px;top:252px;width:13.2px;height:17.6px;background:#ffffff;background:repeating-conic-gradient(#cfcfcf 0% 25%, #ffffff 0% 50%) 0 0/4.4px 4.4px"></div>
<svg class="a" style="left:585.2px;top:250px;" width="17.2" height="21.6" viewBox="0 0 17.2 21.6"><path d="M0.5 4.5V0.5H4.5M12.7 0.5H16.7V4.5M16.7 17.1V21.1H12.7M4.5 21.1H0.5V17.1" fill="none" stroke="#f4f4f4" stroke-width="1"/><rect x="1.6" y="1.6" width="14" height="18.4" fill="none" stroke="#161616" stroke-width="0.8"/></svg>
<svg class="a" style="left:590.8px;top:257.2px;" width="5.8" height="7.8" viewBox="0 0 5.8 7.8"><path d="M0.3 2.8C0.6 1.7 2 1.6 2.9 1.8C3.9 1.6 5.3 1.8 5.5 2.8C5.7 4.2 4.5 7.4 2.8 7.6C1.6 7.4 0.1 4.4 0.3 2.8Z" fill="#d8232a"/><path d="M1 1.3L2.9 2.1L4.9 1.1L3.6 0.1L2.6 0.9L1.8 0.2Z" fill="#3c7a2a"/></svg>
<span class="t" style="left:606px;top:258.2px;font-size:6.7px;color:#ffffff;">图层 1</span>
<div class="a" style="left:587.2px;top:274.2px;width:17px;height:16.6px;background:linear-gradient(140deg,#fff6f7 8%,#ffc4ce 50%,#fd92a6 95%)"></div>
<div class="a" style="left:587.2px;top:287.8px;width:17px;height:3px;background:#6a6a6a;"></div>
<div class="a" style="left:588.2px;top:288.6px;width:6.4px;height:1.8px;background:#b0b0b0;"></div>
<div class="a" style="left:596.8px;top:288.6px;width:6.4px;height:1.8px;background:#b0b0b0;"></div>
<svg class="a" style="left:606.6px;top:278.6px;" width="5" height="9" viewBox="0 0 5 9"><rect x="1" y="0.5" width="3" height="3.4" rx="1.4" fill="none" stroke="#dcdcdc" stroke-width="0.8"/><rect x="1" y="5" width="3" height="3.4" rx="1.4" fill="none" stroke="#dcdcdc" stroke-width="0.8"/><path d="M2.5 2.6V6.4" stroke="#dcdcdc" stroke-width="0.8"/></svg>
<div class="a" style="left:613.4px;top:274.2px;width:13.2px;height:17.2px;background:#fff;"></div>
<span class="t" style="left:632px;top:279.6px;font-size:6.7px;color:#f0f0f0;">渐变填充 1</span>
<div class="a" style="left:587.2px;top:296px;width:13.2px;height:17.2px;background:#fff;"></div>
<span class="t" style="left:607.4px;top:302px;font-size:6.5px;color:#f0f0f0;transform:skewX(-12deg)">背景</span>
<svg class="a" style="left:679px;top:300.6px;" width="6.5" height="8" viewBox="0 0 6.5 8"><rect x="0.5" y="3.4" width="5.5" height="4.2" fill="none" stroke="#dcdcdc" stroke-width="0.9"/><path d="M1.6 3.4V2.2A1.6 1.6 0 0 1 4.9 2.2V3.4" fill="none" stroke="#dcdcdc" stroke-width="0.9"/><rect x="2.6" y="4.6" width="1.3" height="1.8" fill="#dcdcdc"/></svg>
<div class="a" style="left:567.5px;top:395px;width:134.1px;height:10.6px;background:#535353;border-top:0.8px solid #3a3a3a"></div>
<svg class="a" style="left:0px;top:0px;" width="705" height="408" viewBox="0 0 705 408"><defs>
<radialGradient id="sb" cx="0.42" cy="0.34" r="0.78"><stop offset="0" stop-color="#ee2620"/><stop offset="0.5" stop-color="#e01b1b"/><stop offset="0.82" stop-color="#c41418"/><stop offset="1" stop-color="#a00c14"/></radialGradient>
<radialGradient id="sh" cx="0.5" cy="0.5" r="0.5"><stop offset="0" stop-color="#fff" stop-opacity="0.38"/><stop offset="0.5" stop-color="#ffb0a0" stop-opacity="0.2"/><stop offset="1" stop-color="#ff8070" stop-opacity="0"/></radialGradient>
<linearGradient id="sr" x1="0" x2="1" y1="0" y2="0.25"><stop offset="0.62" stop-color="#8a000a" stop-opacity="0"/><stop offset="1" stop-color="#8a000a" stop-opacity="0.35"/></linearGradient>
<radialGradient id="sdg" cx="0.5" cy="0.5" r="0.5"><stop offset="0" stop-color="#8c0810" stop-opacity="0.8"/><stop offset="0.55" stop-color="#a00c14" stop-opacity="0.5"/><stop offset="1" stop-color="#b81218" stop-opacity="0"/></radialGradient>
<g id="sd"><ellipse cx="0" cy="0" rx="3.2" ry="2.9" fill="url(#sdg)"/><ellipse cx="0.1" cy="0.3" rx="1" ry="0.85" fill="#c02c26" opacity="0.85"/><ellipse cx="-0.9" cy="-1.2" rx="0.8" ry="0.5" fill="#ffb8b0" opacity="0.6" transform="rotate(-30)"/></g>
<clipPath id="sc"><path d="M288.0 191.0C293.5 190.9 296.9 190.5 301.0 190.8C305.1 191.1 309.1 191.8 312.6 193.0C316.1 194.2 319.2 195.7 322.0 197.8C324.8 199.9 327.6 202.6 329.6 205.6C331.6 208.6 333.1 212.4 334.0 216.0C334.9 219.6 335.2 223.2 335.0 227.0C334.8 230.8 333.8 234.9 332.6 239.0C331.4 243.1 329.6 247.3 327.6 251.4C325.6 255.5 322.9 259.8 320.5 263.6C318.1 267.4 315.5 270.5 313.0 274.0C310.5 277.5 307.9 281.3 305.5 284.4C303.1 287.5 300.9 290.3 298.5 292.8C296.1 295.3 293.6 297.9 291.0 299.6C288.4 301.3 285.7 302.8 283.0 303.2C280.3 303.6 277.5 303.1 275.0 302.2C272.5 301.3 270.0 299.5 268.0 297.6C266.0 295.7 264.5 293.3 263.0 290.6C261.5 287.9 260.6 285.5 259.0 281.6C257.4 277.7 255.5 271.8 253.6 267.0C251.7 262.2 249.6 257.7 247.6 253.0C245.6 248.3 243.3 243.2 241.6 239.0C239.9 234.8 238.5 231.2 237.4 227.6C236.3 224.0 235.2 220.8 235.2 217.6C235.2 214.4 235.8 211.4 237.2 208.6C238.6 205.8 240.7 203.2 243.4 201.0C246.1 198.8 249.3 196.8 253.4 195.2C257.5 193.6 262.2 192.3 268.0 191.6C273.8 190.9 282.5 191.1 288.0 191.0Z"/></clipPath>
</defs>
<path d="M288.0 191.0C293.5 190.9 296.9 190.5 301.0 190.8C305.1 191.1 309.1 191.8 312.6 193.0C316.1 194.2 319.2 195.7 322.0 197.8C324.8 199.9 327.6 202.6 329.6 205.6C331.6 208.6 333.1 212.4 334.0 216.0C334.9 219.6 335.2 223.2 335.0 227.0C334.8 230.8 333.8 234.9 332.6 239.0C331.4 243.1 329.6 247.3 327.6 251.4C325.6 255.5 322.9 259.8 320.5 263.6C318.1 267.4 315.5 270.5 313.0 274.0C310.5 277.5 307.9 281.3 305.5 284.4C303.1 287.5 300.9 290.3 298.5 292.8C296.1 295.3 293.6 297.9 291.0 299.6C288.4 301.3 285.7 302.8 283.0 303.2C280.3 303.6 277.5 303.1 275.0 302.2C272.5 301.3 270.0 299.5 268.0 297.6C266.0 295.7 264.5 293.3 263.0 290.6C261.5 287.9 260.6 285.5 259.0 281.6C257.4 277.7 255.5 271.8 253.6 267.0C251.7 262.2 249.6 257.7 247.6 253.0C245.6 248.3 243.3 243.2 241.6 239.0C239.9 234.8 238.5 231.2 237.4 227.6C236.3 224.0 235.2 220.8 235.2 217.6C235.2 214.4 235.8 211.4 237.2 208.6C238.6 205.8 240.7 203.2 243.4 201.0C246.1 198.8 249.3 196.8 253.4 195.2C257.5 193.6 262.2 192.3 268.0 191.6C273.8 190.9 282.5 191.1 288.0 191.0Z" fill="url(#sb)"/>
<g clip-path="url(#sc)">
<rect x="230" y="185" width="110" height="125" fill="url(#sr)"/>
<use href="#sd" transform="translate(259.2 196.5) scale(0.88)"/><use href="#sd" transform="translate(265.6 195.3) scale(1.09)"/><use href="#sd" transform="translate(273.3 195.3) scale(1.14)"/><use href="#sd" transform="translate(280.8 196.2) scale(1.03)"/><use href="#sd" transform="translate(286.4 195.2) scale(1.01)"/><use href="#sd" transform="translate(293.2 195.5) scale(0.92)"/><use href="#sd" transform="translate(300.2 195.9) scale(0.98)"/><use href="#sd" transform="translate(308.6 196.0) scale(1.04)"/><use href="#sd" transform="translate(249.0 201.7) scale(1.10)"/><use href="#sd" transform="translate(255.3 202.6) scale(1.10)"/><use href="#sd" transform="translate(261.6 201.4) scale(1.12)"/><use href="#sd" transform="translate(269.4 202.7) scale(0.97)"/><use href="#sd" transform="translate(275.7 202.1) scale(1.08)"/><use href="#sd" transform="translate(283.1 201.2) scale(0.95)"/><use href="#sd" transform="translate(291.3 202.3) scale(0.89)"/><use href="#sd" transform="translate(297.0 201.3) scale(0.87)"/><use href="#sd" transform="translate(305.0 201.4) scale(1.02)"/><use href="#sd" transform="translate(311.4 201.4) scale(1.07)"/><use href="#sd" transform="translate(317.8 202.1) scale(0.88)"/><use href="#sd" transform="translate(244.8 208.4) scale(1.04)"/><use href="#sd" transform="translate(251.3 208.6) scale(0.91)"/><use href="#sd" transform="translate(258.6 208.2) scale(0.95)"/><use href="#sd" transform="translate(265.6 207.1) scale(0.88)"/><use href="#sd" transform="translate(273.1 207.4) scale(1.03)"/><use href="#sd" transform="translate(279.8 207.7) scale(1.14)"/><use href="#sd" transform="translate(287.0 207.9) scale(1.11)"/><use href="#sd" transform="translate(293.4 207.2) scale(1.12)"/><use href="#sd" transform="translate(301.6 207.4) scale(0.91)"/><use href="#sd" transform="translate(308.4 208.5) scale(0.91)"/><use href="#sd" transform="translate(315.8 208.4) scale(1.03)"/><use href="#sd" transform="translate(321.9 207.2) scale(0.86)"/><use href="#sd" transform="translate(241.1 213.2) scale(1.07)"/><use href="#sd" transform="translate(247.7 213.3) scale(1.02)"/><use href="#sd" transform="translate(256.1 213.9) scale(0.93)"/><use href="#sd" transform="translate(263.3 213.2) scale(0.85)"/><use href="#sd" transform="translate(269.1 213.6) scale(0.87)"/><use href="#sd" transform="translate(275.9 213.5) scale(1.02)"/><use href="#sd" transform="translate(282.8 213.5) scale(1.12)"/><use href="#sd" transform="translate(291.4 214.0) scale(1.06)"/><use href="#sd" transform="translate(297.7 213.1) scale(0.86)"/><use href="#sd" transform="translate(303.6 214.4) scale(1.06)"/><use href="#sd" transform="translate(312.3 212.9) scale(1.04)"/><use href="#sd" transform="translate(318.5 214.1) scale(0.95)"/><use href="#sd" transform="translate(326.4 213.0) scale(1.01)"/><use href="#sd" transform="translate(238.5 220.3) scale(0.96)"/><use href="#sd" transform="translate(245.3 220.2) scale(1.11)"/><use href="#sd" transform="translate(251.9 220.1) scale(1.11)"/><use href="#sd" transform="translate(259.1 219.8) scale(0.96)"/><use href="#sd" transform="translate(266.1 219.8) scale(0.87)"/><use href="#sd" transform="translate(273.3 220.4) scale(1.11)"/><use href="#sd" transform="translate(280.4 219.4) scale(1.07)"/><use href="#sd" transform="translate(287.1 219.5) scale(1.10)"/><use href="#sd" transform="translate(293.3 220.0) scale(0.86)"/><use href="#sd" transform="translate(301.2 219.6) scale(0.92)"/><use href="#sd" transform="translate(308.4 219.6) scale(1.03)"/><use href="#sd" transform="translate(315.8 219.2) scale(0.85)"/><use href="#sd" transform="translate(321.6 219.9) scale(0.91)"/><use href="#sd" transform="translate(328.4 220.2) scale(1.05)"/><use href="#sd" transform="translate(241.0 225.4) scale(1.09)"/><use href="#sd" transform="translate(249.2 226.1) scale(0.97)"/><use href="#sd" transform="translate(255.6 225.2) scale(0.89)"/><use href="#sd" transform="translate(262.5 226.0) scale(1.10)"/><use href="#sd" transform="translate(269.9 226.2) scale(0.93)"/><use href="#sd" transform="translate(275.9 225.4) scale(0.93)"/><use href="#sd" transform="translate(283.0 225.4) scale(1.04)"/><use href="#sd" transform="translate(290.5 225.2) scale(1.10)"/><use href="#sd" transform="translate(298.4 225.4) scale(0.87)"/><use href="#sd" transform="translate(303.7 226.1) scale(0.86)"/><use href="#sd" transform="translate(311.9 225.6) scale(0.94)"/><use href="#sd" transform="translate(319.0 224.7) scale(0.89)"/><use href="#sd" transform="translate(325.4 224.7) scale(1.10)"/><use href="#sd" transform="translate(332.0 224.9) scale(0.86)"/><use href="#sd" transform="translate(245.6 232.1) scale(1.06)"/><use href="#sd" transform="translate(251.5 231.4) scale(0.90)"/><use href="#sd" transform="translate(258.1 231.4) scale(1.06)"/><use href="#sd" transform="translate(265.4 231.0) scale(0.95)"/><use href="#sd" transform="translate(273.4 231.4) scale(1.03)"/><use href="#sd" transform="translate(280.5 231.2) scale(1.09)"/><use href="#sd" transform="translate(287.7 230.7) scale(1.13)"/><use href="#sd" transform="translate(294.4 230.8) scale(0.99)"/><use href="#sd" transform="translate(301.2 232.1) scale(0.96)"/><use href="#sd" transform="translate(308.1 232.0) scale(1.09)"/><use href="#sd" transform="translate(315.8 231.3) scale(1.05)"/><use href="#sd" transform="translate(321.5 231.8) scale(1.10)"/><use href="#sd" transform="translate(329.3 231.7) scale(0.91)"/><use href="#sd" transform="translate(249.2 237.9) scale(0.95)"/><use href="#sd" transform="translate(254.7 237.2) scale(1.02)"/><use href="#sd" transform="translate(263.0 237.3) scale(0.86)"/><use href="#sd" transform="translate(270.1 236.6) scale(1.09)"/><use href="#sd" transform="translate(275.9 237.0) scale(1.09)"/><use href="#sd" transform="translate(282.9 236.7) scale(1.00)"/><use href="#sd" transform="translate(290.9 237.8) scale(1.06)"/><use href="#sd" transform="translate(298.3 237.3) scale(1.13)"/><use href="#sd" transform="translate(303.8 236.9) scale(1.01)"/><use href="#sd" transform="translate(311.1 237.7) scale(1.04)"/><use href="#sd" transform="translate(318.5 237.8) scale(1.02)"/><use href="#sd" transform="translate(325.2 237.1) scale(1.10)"/><use href="#sd" transform="translate(252.0 243.4) scale(0.86)"/><use href="#sd" transform="translate(259.8 243.2) scale(0.97)"/><use href="#sd" transform="translate(266.5 243.3) scale(1.00)"/><use href="#sd" transform="translate(273.3 242.5) scale(1.01)"/><use href="#sd" transform="translate(279.8 243.9) scale(1.13)"/><use href="#sd" transform="translate(286.6 243.2) scale(0.89)"/><use href="#sd" transform="translate(293.9 243.7) scale(1.12)"/><use href="#sd" transform="translate(301.0 242.9) scale(0.91)"/><use href="#sd" transform="translate(308.2 243.9) scale(0.89)"/><use href="#sd" transform="translate(315.5 242.4) scale(0.91)"/><use href="#sd" transform="translate(321.5 243.5) scale(0.95)"/><use href="#sd" transform="translate(255.3 249.0) scale(1.01)"/><use href="#sd" transform="translate(261.9 248.6) scale(1.04)"/><use href="#sd" transform="translate(269.7 249.1) scale(1.11)"/><use href="#sd" transform="translate(276.7 249.7) scale(0.92)"/><use href="#sd" transform="translate(283.9 249.6) scale(1.12)"/><use href="#sd" transform="translate(290.2 248.8) scale(1.13)"/><use href="#sd" transform="translate(297.0 249.9) scale(1.12)"/><use href="#sd" transform="translate(303.8 248.7) scale(1.07)"/><use href="#sd" transform="translate(311.1 248.5) scale(1.10)"/><use href="#sd" transform="translate(318.4 249.6) scale(0.89)"/><use href="#sd" transform="translate(325.3 249.4) scale(0.86)"/><use href="#sd" transform="translate(252.3 254.5) scale(0.87)"/><use href="#sd" transform="translate(258.3 254.3) scale(1.02)"/><use href="#sd" transform="translate(266.0 255.1) scale(0.89)"/><use href="#sd" transform="translate(272.4 254.5) scale(1.10)"/><use href="#sd" transform="translate(280.9 255.7) scale(0.88)"/><use href="#sd" transform="translate(286.2 255.7) scale(0.99)"/><use href="#sd" transform="translate(294.5 254.7) scale(0.99)"/><use href="#sd" transform="translate(301.0 254.9) scale(1.03)"/><use href="#sd" transform="translate(307.1 255.3) scale(1.10)"/><use href="#sd" transform="translate(314.4 254.9) scale(1.07)"/><use href="#sd" transform="translate(321.8 254.5) scale(0.90)"/><use href="#sd" transform="translate(256.4 261.4) scale(0.93)"/><use href="#sd" transform="translate(263.2 261.3) scale(1.08)"/><use href="#sd" transform="translate(270.1 260.7) scale(1.12)"/><use href="#sd" transform="translate(277.2 261.2) scale(1.08)"/><use href="#sd" transform="translate(284.0 260.7) scale(1.07)"/><use href="#sd" transform="translate(289.7 260.6) scale(0.99)"/><use href="#sd" transform="translate(296.6 260.7) scale(1.04)"/><use href="#sd" transform="translate(304.7 260.5) scale(1.13)"/><use href="#sd" transform="translate(311.8 260.6) scale(1.05)"/><use href="#sd" transform="translate(318.6 261.0) scale(0.97)"/><use href="#sd" transform="translate(258.8 266.2) scale(0.93)"/><use href="#sd" transform="translate(266.7 266.9) scale(1.00)"/><use href="#sd" transform="translate(273.8 266.9) scale(1.15)"/><use href="#sd" transform="translate(280.2 267.3) scale(0.87)"/><use href="#sd" transform="translate(287.2 267.2) scale(0.86)"/><use href="#sd" transform="translate(294.8 266.3) scale(0.99)"/><use href="#sd" transform="translate(300.4 266.8) scale(1.03)"/><use href="#sd" transform="translate(307.2 267.5) scale(0.98)"/><use href="#sd" transform="translate(262.9 272.0) scale(1.15)"/><use href="#sd" transform="translate(270.3 272.0) scale(1.12)"/><use href="#sd" transform="translate(276.4 272.7) scale(1.14)"/><use href="#sd" transform="translate(283.0 272.7) scale(1.13)"/><use href="#sd" transform="translate(290.9 272.6) scale(1.14)"/><use href="#sd" transform="translate(298.1 272.9) scale(0.88)"/><use href="#sd" transform="translate(304.7 272.6) scale(0.91)"/><use href="#sd" transform="translate(310.7 272.7) scale(0.89)"/><use href="#sd" transform="translate(265.7 278.2) scale(1.06)"/><use href="#sd" transform="translate(273.1 278.7) scale(1.04)"/><use href="#sd" transform="translate(280.5 278.1) scale(0.92)"/><use href="#sd" transform="translate(287.9 279.3) scale(1.11)"/><use href="#sd" transform="translate(293.2 277.9) scale(0.93)"/><use href="#sd" transform="translate(300.9 278.8) scale(0.88)"/><use href="#sd" transform="translate(270.1 284.3) scale(1.05)"/><use href="#sd" transform="translate(277.4 284.2) scale(1.01)"/><use href="#sd" transform="translate(283.9 285.2) scale(0.98)"/><use href="#sd" transform="translate(290.3 283.9) scale(1.11)"/><use href="#sd" transform="translate(296.7 283.8) scale(1.02)"/><use href="#sd" transform="translate(266.8 291.1) scale(0.98)"/><use href="#sd" transform="translate(273.5 290.1) scale(0.95)"/><use href="#sd" transform="translate(279.8 291.1) scale(1.12)"/><use href="#sd" transform="translate(286.5 290.2) scale(0.96)"/><use href="#sd" transform="translate(293.8 290.2) scale(0.97)"/><use href="#sd" transform="translate(275.8 296.5) scale(0.89)"/><use href="#sd" transform="translate(283.9 296.5) scale(0.92)"/><use href="#sd" transform="translate(290.0 296.7) scale(1.01)"/>
<ellipse cx="266" cy="218" rx="18" ry="15" fill="url(#sh)"/>
<ellipse cx="262" cy="262" rx="7" ry="14" fill="url(#sh)" opacity="0.5" transform="rotate(-22 262 262)"/>
<path d="M259 210C264 205.4 273 205.4 279 211M283.4 215L287 222L282.6 228.6M262 227C268 231 275 230 279 226M252 216C251 222 253 228 256 232M246 203C250 199 256 197 262 197" stroke="#ffd6ce" stroke-width="0.9" fill="none" opacity="0.6" stroke-linecap="round"/>
</g>
<path d="M288.0 191.0C293.5 190.9 296.9 190.5 301.0 190.8C305.1 191.1 309.1 191.8 312.6 193.0C316.1 194.2 319.2 195.7 322.0 197.8C324.8 199.9 327.6 202.6 329.6 205.6C331.6 208.6 333.1 212.4 334.0 216.0C334.9 219.6 335.2 223.2 335.0 227.0C334.8 230.8 333.8 234.9 332.6 239.0C331.4 243.1 329.6 247.3 327.6 251.4C325.6 255.5 322.9 259.8 320.5 263.6C318.1 267.4 315.5 270.5 313.0 274.0C310.5 277.5 307.9 281.3 305.5 284.4C303.1 287.5 300.9 290.3 298.5 292.8C296.1 295.3 293.6 297.9 291.0 299.6C288.4 301.3 285.7 302.8 283.0 303.2C280.3 303.6 277.5 303.1 275.0 302.2C272.5 301.3 270.0 299.5 268.0 297.6C266.0 295.7 264.5 293.3 263.0 290.6C261.5 287.9 260.6 285.5 259.0 281.6C257.4 277.7 255.5 271.8 253.6 267.0C251.7 262.2 249.6 257.7 247.6 253.0C245.6 248.3 243.3 243.2 241.6 239.0C239.9 234.8 238.5 231.2 237.4 227.6C236.3 224.0 235.2 220.8 235.2 217.6C235.2 214.4 235.8 211.4 237.2 208.6C238.6 205.8 240.7 203.2 243.4 201.0C246.1 198.8 249.3 196.8 253.4 195.2C257.5 193.6 262.2 192.3 268.0 191.6C273.8 190.9 282.5 191.1 288.0 191.0Z" fill="none" stroke="#c02a30" stroke-width="0.7" opacity="0.45"/>
<path d="M279 189.8C283 186.2 297 186 302 190C298 194 284 194.2 279 189.8Z" fill="#b4be48"/>
<path d="M250.6 168.5C250.2 169.3 250.4 172.4 251.6 175.0C252.8 177.6 254.6 180.3 257.0 182.6C259.4 184.9 261.9 186.3 265.0 187.6C268.1 188.9 270.7 189.5 274.0 190.0C277.3 190.5 281.4 190.9 283.0 190.4C284.6 189.9 285.0 187.9 283.0 187.0C281.0 186.1 275.5 186.6 272.0 185.6C268.5 184.6 266.5 183.4 264.0 181.6C261.5 179.8 259.8 177.6 258.0 175.6C256.2 173.6 255.3 171.7 254.0 170.4C252.7 169.1 251.0 167.7 250.6 168.5Z" fill="#35701f"/><path d="M316.2 176.0C316.0 175.5 313.1 176.7 311.0 177.6C308.9 178.5 307.0 179.6 304.6 181.2C302.2 182.8 299.6 184.9 298.0 186.6C296.4 188.3 295.1 189.9 295.6 190.4C296.1 190.9 298.6 190.4 300.6 189.6C302.6 188.8 304.3 187.4 306.4 185.8C308.5 184.2 310.2 182.4 312.0 180.6C313.8 178.8 316.4 176.5 316.2 176.0Z" fill="#35701f"/><path d="M288.0 160.8C289.0 159.7 290.4 162.4 291.6 164.0C292.8 165.6 293.9 167.3 294.8 169.6C295.7 171.9 296.5 173.8 296.6 176.4C296.7 179.0 296.4 181.7 295.6 184.0C294.8 186.3 293.5 188.3 292.0 189.0C290.5 189.7 288.7 189.6 287.6 188.0C286.5 186.4 286.5 183.3 286.2 180.0C285.9 176.7 285.7 173.5 286.0 170.0C286.3 166.5 287.0 161.9 288.0 160.8Z" fill="#40842a"/><path d="M309.5 160.2C310.9 160.3 310.4 163.5 310.4 165.6C310.4 167.7 310.1 169.3 309.4 171.6C308.7 173.9 307.9 175.6 306.4 178.0C304.9 180.4 303.2 182.5 301.2 184.6C299.2 186.7 297.3 189.0 295.6 189.6C293.9 190.2 292.4 189.7 292.0 188.0C291.6 186.3 292.7 182.8 293.6 180.0C294.5 177.2 295.6 175.1 297.2 172.4C298.8 169.7 300.4 167.2 302.6 165.0C304.8 162.8 308.1 160.1 309.5 160.2Z" fill="#3d7827"/><path d="M272.2 153.0C273.4 152.7 274.7 153.7 276.2 155.2C277.7 156.7 278.9 158.5 280.2 161.0C281.5 163.5 282.5 165.9 283.4 169.0C284.3 172.1 284.9 174.7 285.4 178.0C285.9 181.3 286.7 185.4 286.0 187.0C285.3 188.6 283.3 188.2 281.6 187.0C279.9 185.8 278.2 183.2 276.4 180.4C274.6 177.6 272.9 174.8 271.6 171.6C270.3 168.4 269.6 165.7 269.2 163.0C268.8 160.3 269.1 158.8 269.6 157.0C270.1 155.2 271.0 153.3 272.2 153.0Z" fill="#397625"/><path d="M260.4 165.6C261.1 164.3 264.1 164.9 266.2 165.6C268.3 166.3 270.1 167.8 272.2 169.6C274.3 171.4 276.1 173.3 278.0 175.6C279.9 177.9 281.3 179.7 282.6 182.0C283.9 184.3 286.0 187.0 285.4 188.4C284.8 189.8 281.8 190.1 279.4 189.6C277.0 189.1 274.8 187.6 272.4 185.8C270.0 184.0 268.2 182.2 266.4 179.8C264.6 177.4 263.5 175.2 262.4 172.6C261.3 170.0 259.7 166.9 260.4 165.6Z" fill="#4f9230"/><path d="M262 166.8C268 169 276 177 283 187" stroke="#9fd066" stroke-width="1.6" fill="none" opacity="0.7"/><path d="M263 171.6C267 179 273 185 280 188.6" stroke="#3c7a2a" stroke-width="1.2" fill="none" opacity="0.6"/><path d="M271.2 158C271.6 166 276 177 282 185.6" stroke="#74ac48" stroke-width="1.6" fill="none" opacity="0.65"/><path d="M275.6 156.6C280 163 283.6 174 284.8 185" stroke="#2b601f" stroke-width="1.4" fill="none" opacity="0.6"/><path d="M308.4 162.6C304 168 298 177 294.6 186" stroke="#8cc05a" stroke-width="1.5" fill="none" opacity="0.7"/><path d="M309.6 167C308 174 303 181 297 187.6" stroke="#2c641f" stroke-width="1.3" fill="none" opacity="0.55"/><path d="M289.6 163.4C293 169 294.6 177 293 186" stroke="#88bc56" stroke-width="1.2" fill="none" opacity="0.65"/><path d="M252 171.6C254 178 261 184.6 272 188" stroke="#7fb34e" stroke-width="0.9" fill="none" opacity="0.65"/><path d="M270 184C276 188.6 283 189.6 288 189.4C294 189.6 299 188.6 303 185" stroke="#275a1c" stroke-width="1.8" fill="none" opacity="0.55"/>
<ellipse cx="290.5" cy="188.8" rx="5.4" ry="2.2" fill="#cfd060"/>
</svg>
<svg class="a" style="left:197.5px;top:23.2px;" width="8.4" height="8" viewBox="0 0 8.4 8"><g fill="#a4a4a4" stroke="none"><rect x="0" y="0" width="8.4" height="0.8"/><rect x="0.95" y="1.75" width="2.3" height="5.7" fill="none" stroke="#a4a4a4" stroke-width="0.7"/><rect x="4.6" y="1.4" width="3" height="3.6"/></g></svg>
<svg class="a" style="left:210.6px;top:23.2px;" width="9" height="8" viewBox="0 0 9 8"><g fill="#a4a4a4" stroke="none"><rect x="0" y="3.6" width="9" height="0.8"/><rect x="1.5499999999999998" y="0.75" width="2.5" height="6.5" fill="none" stroke="#a4a4a4" stroke-width="0.7"/><rect x="5.4" y="2.2" width="2.8" height="3.6"/></g></svg>
<svg class="a" style="left:224px;top:23.2px;" width="8.6" height="8" viewBox="0 0 8.6 8"><g fill="#a4a4a4" stroke="none"><rect x="0" y="7.2" width="8.6" height="0.8"/><rect x="1.15" y="0.55" width="2.3" height="5.8999999999999995" fill="none" stroke="#a4a4a4" stroke-width="0.7"/><rect x="4.8" y="3.2" width="3" height="3.6"/></g></svg>
<svg class="a" style="left:242px;top:23.2px;" width="8.4" height="8" viewBox="0 0 8.4 8"><g fill="#a4a4a4" stroke="none"><rect x="0" y="0" width="0.8" height="8"/><rect x="1.4" y="0.8" width="4.2" height="2.8"/><rect x="1.75" y="4.75" width="6.1" height="2.0999999999999996" fill="none" stroke="#a4a4a4" stroke-width="0.7"/></g></svg>
<svg class="a" style="left:256px;top:23.2px;" width="8.4" height="8" viewBox="0 0 8.4 8"><g fill="#a4a4a4" stroke="none"><rect x="3.8" y="0" width="0.8" height="8"/><rect x="2.2" y="0.8" width="4" height="2.8"/><rect x="1.15" y="4.75" width="6.1" height="2.0999999999999996" fill="none" stroke="#a4a4a4" stroke-width="0.7"/></g></svg>
<svg class="a" style="left:269px;top:23.2px;" width="8.4" height="8" viewBox="0 0 8.4 8"><g fill="#a4a4a4" stroke="none"><rect x="7.6" y="0" width="0.8" height="8"/><rect x="2.8" y="0.8" width="4.2" height="2.8"/><rect x="0.55" y="4.75" width="6.1" height="2.0999999999999996" fill="none" stroke="#a4a4a4" stroke-width="0.7"/></g></svg>
<svg class="a" style="left:291.5px;top:23.4px;" width="9.6" height="7.4" viewBox="0 0 9.6 7.4"><g fill="#a4a4a4" stroke="none"><rect x="0" y="0.6" width="9.6" height="0.8"/><rect x="2.4" y="1.4" width="4.8" height="1.8"/><rect x="0" y="4.6" width="9.6" height="0.8"/><rect x="2.15" y="5.75" width="5.3" height="1.3" fill="none" stroke="#a4a4a4" stroke-width="0.7"/></g></svg>
<svg class="a" style="left:305px;top:23.4px;" width="9.6" height="7.4" viewBox="0 0 9.6 7.4"><g fill="#a4a4a4" stroke="none"><rect x="0" y="1.6" width="9.6" height="0.8"/><rect x="2.6" y="0.6" width="4.4" height="2.6"/><rect x="0" y="5.4" width="9.6" height="0.8"/><rect x="2.15" y="4.75" width="5.3" height="2.0999999999999996" fill="none" stroke="#a4a4a4" stroke-width="0.7"/></g></svg>
<svg class="a" style="left:318.5px;top:23.4px;" width="9.6" height="7.4" viewBox="0 0 9.6 7.4"><g fill="#a4a4a4" stroke="none"><rect x="0" y="2.8" width="9.6" height="0.8"/><rect x="2.4" y="0.8" width="4.8" height="2"/><rect x="0" y="6.6" width="9.6" height="0.8"/><rect x="2.15" y="4.75" width="5.3" height="1.5000000000000002" fill="none" stroke="#a4a4a4" stroke-width="0.7"/></g></svg>
<svg class="a" style="left:337px;top:23.2px;" width="8.4" height="8" viewBox="0 0 8.4 8"><g fill="#a4a4a4" stroke="none"><rect x="0.8" y="0" width="0.8" height="8"/><rect x="1.9500000000000002" y="1.5499999999999998" width="1.5000000000000002" height="4.8999999999999995" fill="none" stroke="#a4a4a4" stroke-width="0.7"/><rect x="4.8" y="0" width="0.8" height="8"/><rect x="5.6" y="2.2" width="2.2" height="3.6"/></g></svg>
<svg class="a" style="left:351px;top:23.2px;" width="8.4" height="8" viewBox="0 0 8.4 8"><g fill="#a4a4a4" stroke="none"><rect x="1.8" y="0" width="0.8" height="8"/><rect x="1.15" y="1.5499999999999998" width="2.0999999999999996" height="4.8999999999999995" fill="none" stroke="#a4a4a4" stroke-width="0.7"/><rect x="5.8" y="0" width="0.8" height="8"/><rect x="4.8" y="2.2" width="2.8" height="3.6"/></g></svg>
<svg class="a" style="left:364.4px;top:23.2px;" width="8.4" height="8" viewBox="0 0 8.4 8"><g fill="#a4a4a4" stroke="none"><rect x="2.8" y="0" width="0.8" height="8"/><rect x="0.95" y="1.5499999999999998" width="1.5000000000000002" height="4.8999999999999995" fill="none" stroke="#a4a4a4" stroke-width="0.7"/><rect x="6.8" y="0" width="0.8" height="8"/><rect x="4.6" y="2.2" width="2.2" height="3.6"/></g></svg>
<svg class="a" style="left:386px;top:23px;" width="10.4" height="8.6" viewBox="0 0 10.4 8.6"><g fill="#a4a4a4" stroke="none"><rect x="0.75" y="0.55" width="3.3" height="7.499999999999999" fill="none" stroke="#a4a4a4" stroke-width="0.7"/><rect x="6.1499999999999995" y="0.55" width="3.3" height="7.499999999999999" fill="none" stroke="#a4a4a4" stroke-width="0.7"/><rect x="1.2" y="1" width="2.4" height="3"/><rect x="6.6" y="1" width="2.4" height="3"/></g></svg>
<svg class="a" style="left:594.2px;top:144.8px;" width="9.8" height="9.2" viewBox="0 0 9.8 9.2"><g stroke="#dedede" stroke-width="0.9" fill="none"><path d="M8.10 4.60L9.60 4.60"/><path d="M7.16 6.86L8.22 7.92"/><path d="M4.90 7.80L4.90 9.30"/><path d="M2.64 6.86L1.58 7.92"/><path d="M1.70 4.60L0.20 4.60"/><path d="M2.64 2.34L1.58 1.28"/><path d="M4.90 1.40L4.90 -0.10"/><path d="M7.16 2.34L8.22 1.28"/><circle cx="4.9" cy="4.6" r="2.2"/></g><path d="M4.9 2.4A2.2 2.2 0 0 1 4.9 6.8Z" fill="#dedede"/></svg>
<svg class="a" style="left:607px;top:146px;" width="11.6" height="6.6" viewBox="0 0 11.6 6.6"><path d="M0 6.6V4.4L1 3.6L1.8 4.6L2.8 1.8L3.8 3.8L4.8 0.4L5.8 3L6.8 1L7.8 3.4L8.8 2L9.8 4L10.8 3.2L11.6 4.6V6.6Z" fill="#dedede"/><rect x="0" y="5.8" width="11.6" height="0.8" fill="#fff"/></svg>
<svg class="a" style="left:622px;top:145.4px;" width="9.6" height="8" viewBox="0 0 9.6 8"><rect x="0.45" y="0.45" width="8.7" height="7.1" fill="#8c8c8c" stroke="#dedede" stroke-width="0.9"/><path d="M0.5 2.9H9.1M0.5 5.2H9.1M3.4 0.5V7.5M6.3 0.5V7.5" stroke="#dedede" stroke-width="0.5"/><path d="M0.8 7.2C4 6.8 5.4 3 8.8 0.8" stroke="#fff" stroke-width="0.9" fill="none"/></svg>
<svg class="a" style="left:635px;top:145.4px;" width="10" height="8" viewBox="0 0 10 8"><rect x="0.45" y="0.45" width="9.1" height="7.1" fill="#7a7a7a" stroke="#dedede" stroke-width="0.9"/><path d="M0.6 7.4L9.4 0.6V7.4Z" fill="#c4c4c4"/><path d="M1.6 2.4H4M2.8 1.2V3.6M6.2 5.8H8.4" stroke="#fff" stroke-width="0.7"/></svg>
<svg class="a" style="left:648.5px;top:145px;" width="10" height="9" viewBox="0 0 10 9"><path d="M0.5 0.5H9.5L5 8.5Z" fill="#8c8c8c" stroke="#dedede" stroke-width="0.9"/><path d="M2.8 2.2H7.2L5 6.2Z" fill="#dedede"/></svg>
<svg class="a" style="left:588px;top:160.8px;" width="9.6" height="8" viewBox="0 0 9.6 8"><rect x="0.45" y="0.45" width="8.7" height="7.1" fill="#8a8a8a" stroke="#dedede" stroke-width="0.9"/><rect x="0.9" y="0.9" width="7.8" height="2.4" fill="#dedede"/><path d="M3.4 0.9V3.3M6 0.9V3.3" stroke="#666" stroke-width="0.6"/><rect x="0.9" y="3.9" width="7.8" height="3.2" fill="url(#gwh)"/></svg>
<svg class="a" style="left:601px;top:160.6px;" width="10" height="8.4" viewBox="0 0 10 8.4"><g stroke="#dedede" stroke-width="0.8" fill="none"><path d="M5 0.4V2M1.6 2H8.4M1.6 2L0.4 5.6M1.6 2L2.8 5.6M8.4 2L7.2 5.6M8.4 2L9.6 5.6"/><path d="M3.4 7.8H6.6M5 2V7.8"/></g><path d="M0.2 5.6H3A1.4 1.4 0 0 1 0.2 5.6ZM7 5.6H9.8A1.4 1.4 0 0 1 7 5.6Z" fill="#dedede"/><circle cx="5" cy="1" r="0.9" fill="#dedede"/></svg>
<svg class="a" style="left:615px;top:160.8px;" width="9.6" height="8" viewBox="0 0 9.6 8"><rect x="0.45" y="0.45" width="8.7" height="7.1" fill="#2c2c2c" stroke="#dedede" stroke-width="0.9"/><rect x="4.8" y="0.9" width="3.9" height="6.2" fill="url(#gwv)"/></svg>
<svg class="a" style="left:627.6px;top:160.4px;" width="10.4" height="9" viewBox="0 0 10.4 9"><rect x="0.4" y="1" width="6.4" height="4.6" fill="#8a8a8a" stroke="#dedede" stroke-width="0.8"/><rect x="1.6" y="0.2" width="2.4" height="1" fill="#dedede"/><circle cx="7" cy="5.8" r="2.8" fill="#9a9a9a" stroke="#dedede" stroke-width="0.8"/><circle cx="7" cy="5.8" r="1.2" fill="#dedede"/></svg>
<svg class="a" style="left:641.5px;top:160.4px;" width="10" height="9" viewBox="0 0 10 9"><circle cx="5" cy="3" r="2.6" fill="#dedede"/><circle cx="3" cy="6" r="2.6" fill="#dedede"/><circle cx="7" cy="6" r="2.6" fill="#dedede"/><circle cx="5" cy="3" r="1.2" fill="#555"/><circle cx="3" cy="6.2" r="1.2" fill="#555"/><circle cx="7" cy="6.2" r="1.2" fill="#555"/></svg>
<svg class="a" style="left:655px;top:160.8px;" width="10" height="8" viewBox="0 0 10 8"><rect x="0.45" y="0.45" width="9.1" height="7.1" fill="#9a9a9a" stroke="#dedede" stroke-width="0.9"/><path d="M0.5 2.8H9.5M0.5 5.2H9.5M3.6 0.5V7.5M6.6 0.5V7.5" stroke="#dedede" stroke-width="0.7"/><rect x="0.9" y="0.9" width="8.2" height="1.6" fill="#dedede"/></svg>
<svg class="a" style="left:594.5px;top:175.6px;" width="9.8" height="8.2" viewBox="0 0 9.8 8.2"><rect x="0.45" y="0.45" width="8.9" height="7.299999999999999" fill="#3a3a3a" stroke="#dedede" stroke-width="0.9"/><path d="M2 6.4C2.4 3.6 5 1.6 7.8 1.8C7.4 4.6 4.8 6.6 2 6.4Z" fill="#dedede"/></svg>
<svg class="a" style="left:608px;top:175.6px;" width="9.8" height="8.2" viewBox="0 0 9.8 8.2"><rect x="0.45" y="0.45" width="8.9" height="7.299999999999999" fill="#777" stroke="#dedede" stroke-width="0.9"/><path d="M0.8 7.4L9 0.8" stroke="#c8c8c8" stroke-width="2.6"/><path d="M0.8 4.6L5.4 0.8M4.4 7.4L9 3.6" stroke="#9c9c9c" stroke-width="1"/></svg>
<svg class="a" style="left:621.5px;top:175.6px;" width="9.8" height="8.2" viewBox="0 0 9.8 8.2"><rect x="0.45" y="0.45" width="8.9" height="7.299999999999999" fill="#e8e8e8" stroke="#dedede" stroke-width="0.9"/><path d="M0.9 7.3V5.4L3.6 4.6L5.8 3.2L8.9 2.2V0.9H0.9Z" fill="#e8e8e8"/><path d="M0.9 7.3V5.2L3.6 4.8L5.8 3L8.9 2.4V7.3Z" fill="#e8e8e8"/><path d="M0.9 5.8L3.6 5L5.8 3.4L8.9 2.8" stroke="#2a2a2a" stroke-width="1.5" fill="none"/></svg>
<svg class="a" style="left:635px;top:175.6px;" width="9.8" height="8.2" viewBox="0 0 9.8 8.2"><rect x="0.45" y="0.45" width="8.9" height="7.299999999999999" fill="#8a8a8a" stroke="#dedede" stroke-width="0.9"/><path d="M0.9 0.9L4.9 4.1L0.9 7.3ZM8.9 0.9L4.9 4.1L8.9 7.3Z" fill="#d4d4d4"/></svg>
<svg class="a" style="left:648.5px;top:175.6px;" width="9.8" height="8.2" viewBox="0 0 9.8 8.2"><rect x="0.45" y="0.45" width="8.9" height="7.299999999999999" fill="#666" stroke="#dedede" stroke-width="0.9"/><rect x="0.9" y="0.9" width="8" height="6.4" fill="url(#gwh2)"/></svg>
<svg width="0" height="0" style="position:absolute"><defs><linearGradient id="gwh" x1="0" x2="1"><stop offset="0" stop-color="#4a4a4a"/><stop offset="1" stop-color="#f0f0f0"/></linearGradient><linearGradient id="gwv" x1="0" x2="1"><stop offset="0" stop-color="#ffffff"/><stop offset="1" stop-color="#c0c0c0"/></linearGradient><linearGradient id="gwh2" x1="0" x2="1"><stop offset="0" stop-color="#3e3e3e"/><stop offset="1" stop-color="#ececec"/></linearGradient></defs></svg>
<svg class="a" style="left:620.8px;top:207px;" width="8" height="6" viewBox="0 0 8 6"><rect x="0.4" y="0.4" width="7.2" height="5.2" fill="none" stroke="#e6e6e6" stroke-width="0.8"/><path d="M1.2 4.8L3 2.6L4.2 3.8L5 3.2L6.6 4.8Z" fill="#e6e6e6"/><circle cx="5.8" cy="1.9" r="0.7" fill="#e6e6e6"/></svg>
<svg class="a" style="left:635px;top:206.6px;" width="6.6" height="6.6" viewBox="0 0 6.6 6.6"><circle cx="3.3" cy="3.3" r="2.8" fill="none" stroke="#e6e6e6" stroke-width="0.9"/><path d="M1.3 5.3A2.8 2.8 0 0 1 5.3 1.3Z" fill="#e6e6e6"/></svg>
<span class="t" style="left:648.2px;top:205.6px;font-size:8.6px;color:#e6e6e6;font-family:'Liberation Serif',serif;">T</span>
<svg class="a" style="left:662px;top:206.4px;" width="7.4" height="7.4" viewBox="0 0 7.4 7.4"><rect x="1.2" y="1.2" width="5" height="5" fill="none" stroke="#e6e6e6" stroke-width="0.8"/><rect x="0" y="0" width="2" height="2" fill="#e6e6e6"/><rect x="5.4" y="0" width="2" height="2" fill="#e6e6e6"/><rect x="0" y="5.4" width="2" height="2" fill="#e6e6e6"/><rect x="5.4" y="5.4" width="2" height="2" fill="#e6e6e6"/></svg>
<svg class="a" style="left:675.4px;top:206.2px;" width="7.2" height="7.6" viewBox="0 0 7.2 7.6"><path d="M1.8 0.4H5L6.8 2.2V6H1.8Z" fill="none" stroke="#e6e6e6" stroke-width="0.8"/><rect x="0.2" y="3.8" width="3.8" height="3.6" fill="#e6e6e6"/><path d="M4.8 0.4V2.4H6.8" fill="none" stroke="#e6e6e6" stroke-width="0.6"/></svg>
<div class="a" style="left:695.2px;top:205.4px;width:4.8px;height:8.8px;background:#2e2e2e;border-radius:1.2px;border:0.5px solid #222"></div>
<div class="a" style="left:696px;top:206px;width:3.2px;height:3.2px;background:#8a8a8a;border-radius:0.8px"></div>
<div class="a" style="left:592px;top:238.6px;width:6.6px;height:6.6px;background:#e8e8e8;background:repeating-conic-gradient(#555 0% 25%, #e8e8e8 0% 50%) 0 0/3.3px 3.3px;border:0.4px solid #e0e0e0"></div>
<svg class="a" style="left:603px;top:238px;" width="10.4" height="7.6" viewBox="0 0 10.4 7.6"><path d="M10 0.2L4.6 4.6L5.6 5.6L10.4 0.8Z" fill="#e6e6e6"/><path d="M4.2 4.8C2.8 5 2.6 6.4 0.4 7C2 7.8 5 7.4 5.4 5.8Z" fill="#e6e6e6"/></svg>
<svg class="a" style="left:616.2px;top:238px;" width="7.6" height="7.6" viewBox="0 0 7.6 7.6"><path d="M3.8 0.9V6.7M0.9 3.8H6.7" stroke="#e6e6e6" stroke-width="0.8"/><path d="M3.8 0L2.7 1.4H4.9ZM3.8 7.6L2.7 6.2H4.9ZM0 3.8L1.4 2.7V4.9ZM7.6 3.8L6.2 2.7V4.9Z" fill="#e6e6e6"/></svg>
<svg class="a" style="left:629.4px;top:237.6px;" width="6.2" height="8" viewBox="0 0 6.2 8"><rect x="0.3" y="3.4" width="5.6" height="4.3" rx="0.5" fill="#e6e6e6"/><path d="M1.5 3.4V2.3A1.6 1.6 0 0 1 4.7 2.3V3.4" fill="none" stroke="#e6e6e6" stroke-width="0.9"/><rect x="2.6" y="4.8" width="1" height="1.6" fill="#444"/></svg>
<svg class="a" style="left:588px;top:399.4px;" width="8.4" height="4.4" viewBox="0 0 8.4 4.4"><rect x="0.4" y="0.4" width="4.4" height="3.4" rx="1.7" fill="none" stroke="#a6a6a6" stroke-width="0.8"/><rect x="3.6" y="0.4" width="4.4" height="3.4" rx="1.7" fill="none" stroke="#a6a6a6" stroke-width="0.8"/></svg>
<span class="t" style="left:604.4px;top:396.6px;font-size:8.4px;color:#e6e6e6;font-family:'Liberation Serif',serif;font-style:italic;letter-spacing:-0.3px">fx</span>
<div class="a" style="left:612.4px;top:403px;width:1px;height:1px;background:#e6e6e6;"></div>
<svg class="a" style="left:618.9px;top:398.8px;" width="7.6" height="5.4" viewBox="0 0 7.6 5.4"><rect x="0" y="0" width="7.6" height="5.4" fill="#e6e6e6"/><circle cx="3.8" cy="2.7" r="1.6" fill="#4a4a4a"/></svg>
<svg class="a" style="left:634px;top:398.4px;" width="7" height="6.2" viewBox="0 0 7 6.2"><circle cx="3.1" cy="3.1" r="2.7" fill="none" stroke="#e6e6e6" stroke-width="0.9"/><path d="M1.2 5A2.7 2.7 0 0 1 5 1.2Z" fill="#e6e6e6"/></svg>
<div class="a" style="left:642.6px;top:403px;width:1px;height:1px;background:#e6e6e6;"></div>
<svg class="a" style="left:648.8px;top:398.4px;" width="7.6" height="5.8" viewBox="0 0 7.6 5.8"><path d="M0 0.8H2.6L3.4 1.6H7.6V5.8H0Z" fill="#e6e6e6"/></svg>
<svg class="a" style="left:664.6px;top:398.4px;" width="6.6" height="6" viewBox="0 0 6.6 6"><path d="M0.4 0.4H6.2V4L4.4 5.6H0.4Z" fill="#e6e6e6"/><path d="M4.2 5.8V3.8H6.4" fill="#4a4a4a"/><path d="M0.4 3.4H3V5.6H0.4Z" fill="#4a4a4a"/></svg>
<svg class="a" style="left:679.6px;top:397.2px;" width="6.4" height="6.8" viewBox="0 0 6.4 6.8"><path d="M0.7 2.2H5.7V6.6H0.7Z" fill="#c4c4c4"/><path d="M0 1.7H6.4M2.1 1.6V0.5H4.3V1.6" stroke="#c4c4c4" stroke-width="0.8" fill="none"/><path d="M2.3 3V5.8M4.1 3V5.8" stroke="#555" stroke-width="0.7"/></svg>
<div class="a" style="left:694.2px;top:249.6px;width:7.4px;height:145.4px;background:#4c4c4c;border-left:0.8px solid #3c3c3c"></div>
<svg class="a" style="left:580px;top:362px;" width="30" height="27" viewBox="0 0 30 27"><g fill="#e6e6e6"><ellipse cx="11.2" cy="10.6" rx="9.9" ry="8.9"/><path d="M3.6 16.5L2.4 21.6L8.6 18.6Z"/></g>
<g><ellipse cx="20" cy="17" rx="9.3" ry="8" fill="#4a4a4a"/><ellipse cx="20" cy="17" rx="8.4" ry="7.2" fill="#e6e6e6"/><path d="M24.4 22.8L26.2 26L21.4 24Z" fill="#e6e6e6"/></g>
<g fill="#4a4a4a"><circle cx="8" cy="7.4" r="1.25"/><circle cx="14.6" cy="7.4" r="1.25"/><circle cx="17.2" cy="14.8" r="1.05"/><circle cx="22.8" cy="14.8" r="1.05"/></g></svg>
<span class="t" style="left:612.8px;top:366.8px;font-size:17px;color:#f0f0f0;font-weight:500">极微设计</span>
<svg class="a" style="left:0px;top:0px;" width="705" height="408" viewBox="0 0 705 408"><text x="536.2" y="22.4" font-family="Liberation Serif, Noto Serif CJK SC, serif" font-weight="bold" font-size="12.3" textLength="61.6" lengthAdjust="spacingAndGlyphs" fill="#141414" stroke="#d0d0d0" stroke-width="1.05" paint-order="stroke" stroke-linejoin="round">设计教程网</text><text x="523" y="22.8" font-family="Liberation Serif, serif" font-weight="bold" font-size="12.6" textLength="13.6" lengthAdjust="spacingAndGlyphs" fill="#141414" stroke="#c4c4c4" stroke-width="1.2" paint-order="stroke" stroke-linejoin="round">PS</text><text x="606.8" y="22.4" font-family="Liberation Mono, monospace" font-weight="bold" font-size="10.2" textLength="86" lengthAdjust="spacingAndGlyphs" fill="#0c0c0c" stroke="#d8d8d8" stroke-width="1.05" paint-order="stroke" stroke-linejoin="round">WWW.MISSYUAN.NET</text></svg>
</div>
</body></html>
